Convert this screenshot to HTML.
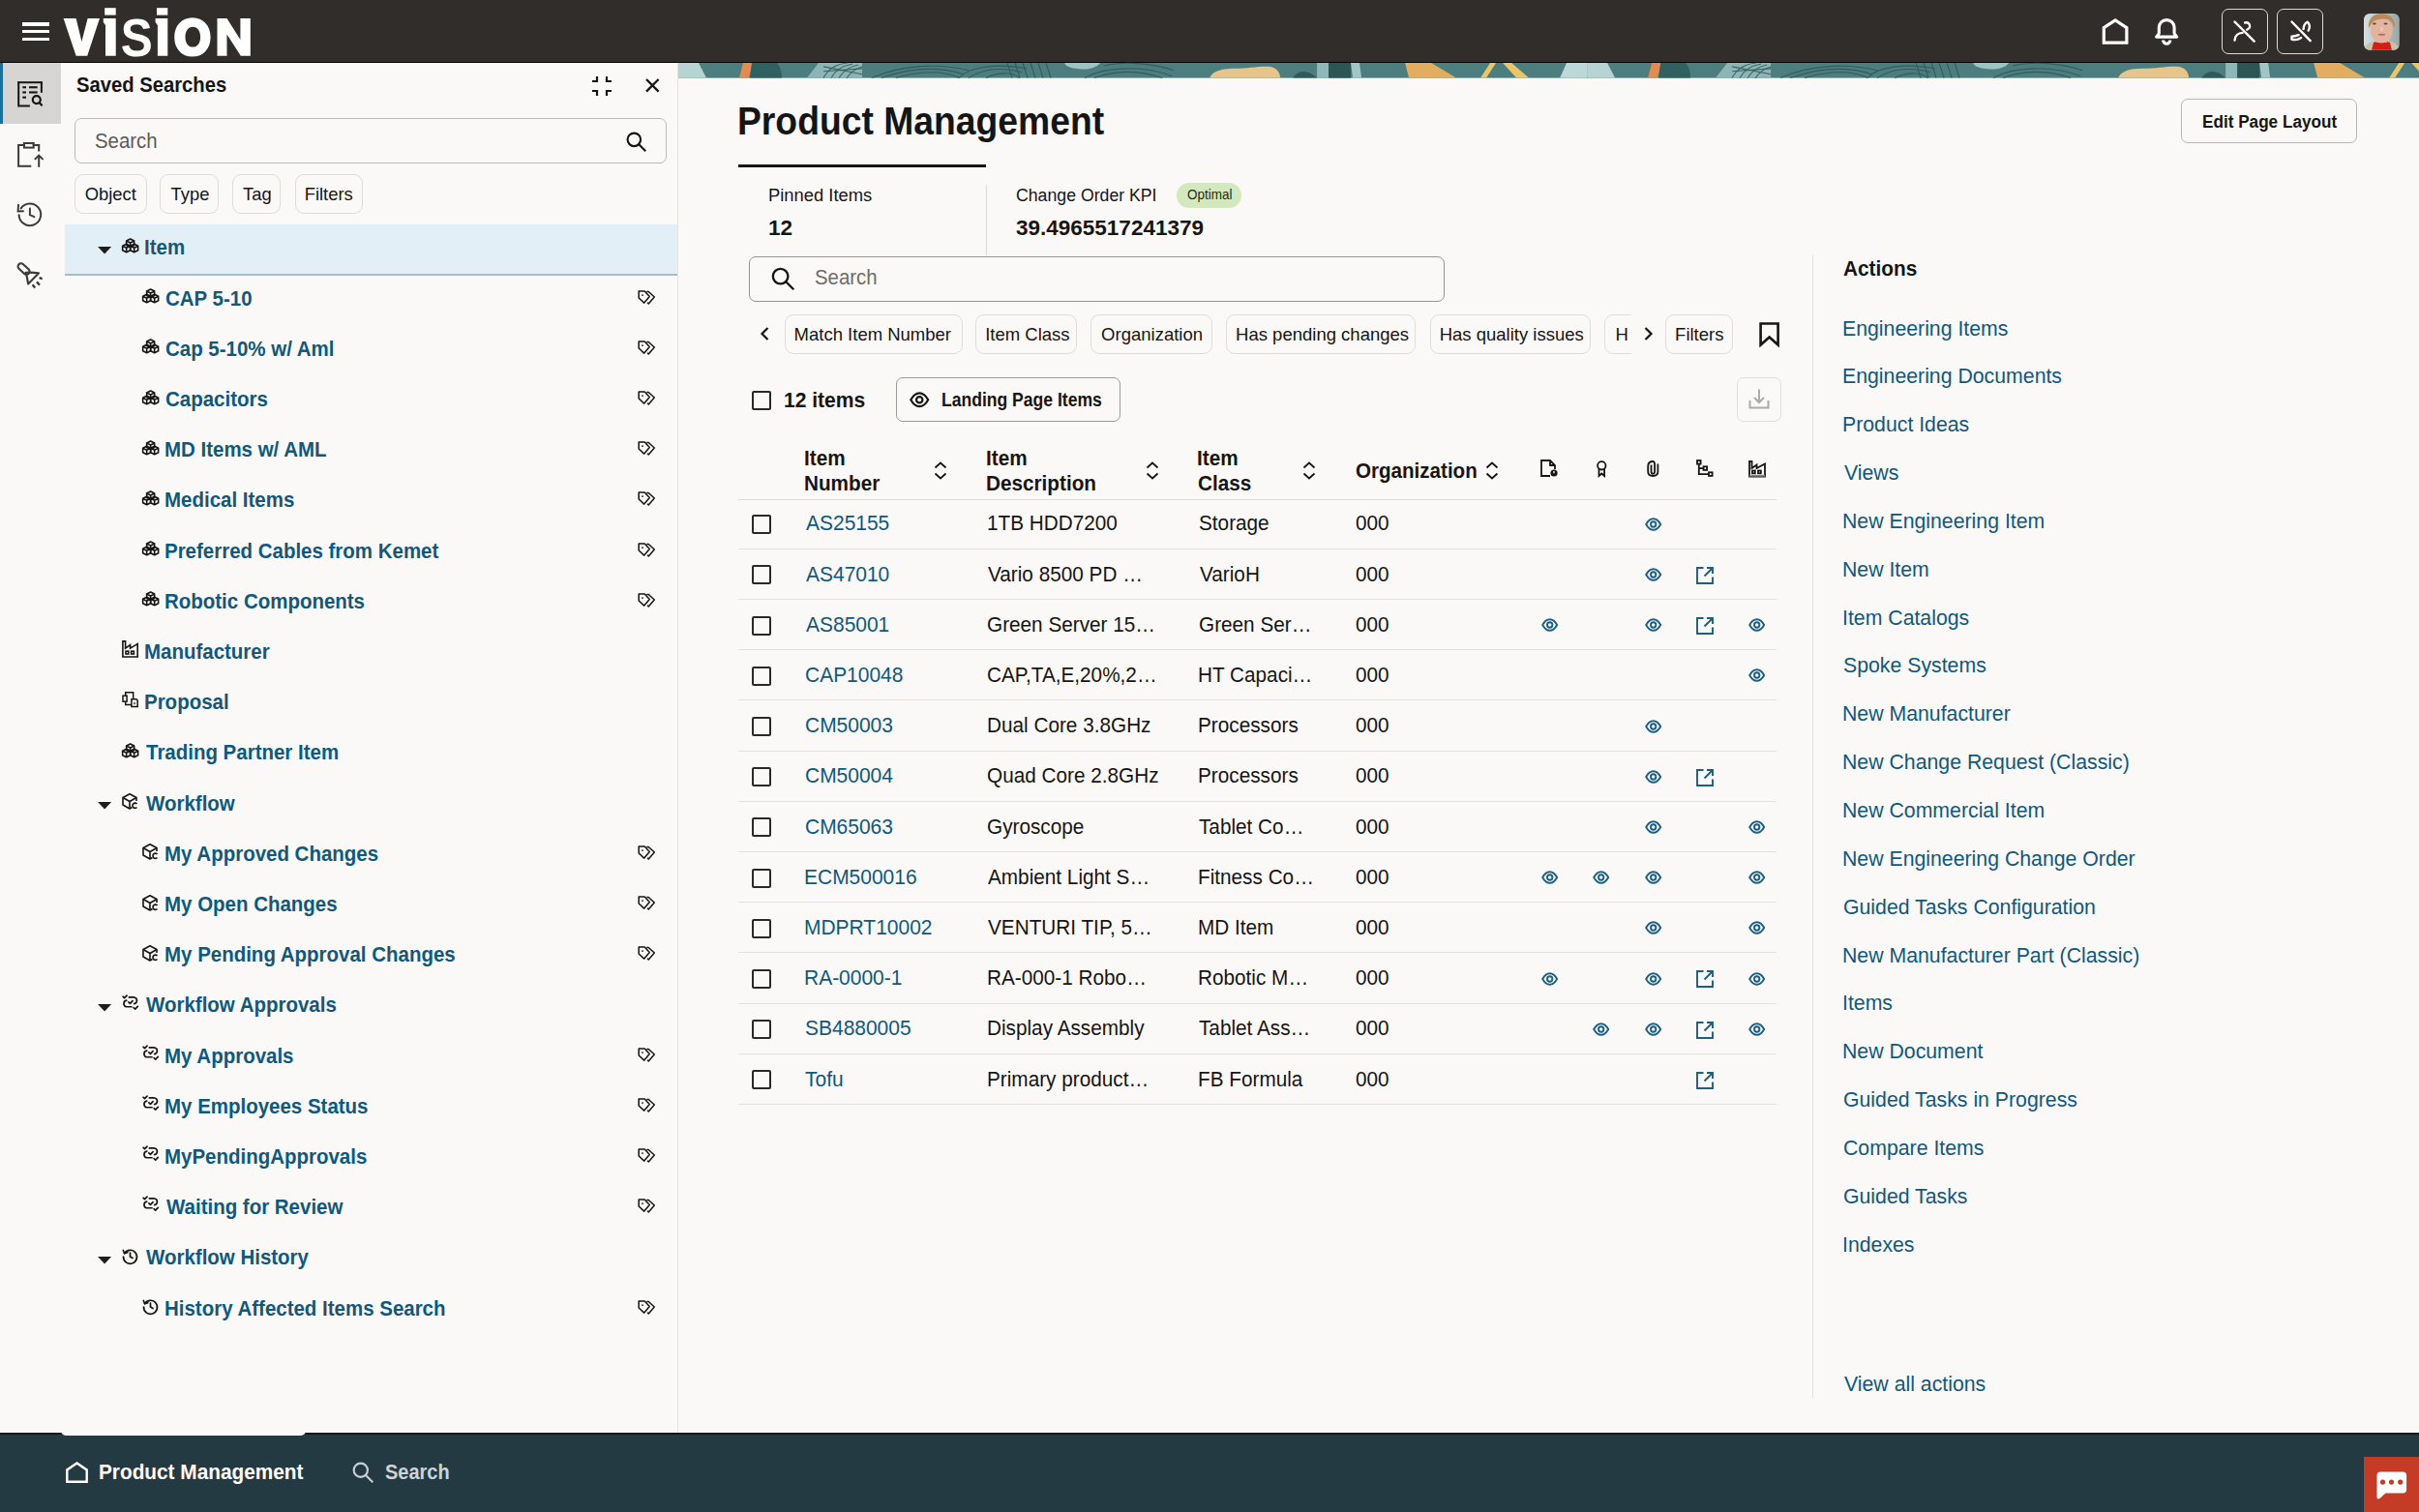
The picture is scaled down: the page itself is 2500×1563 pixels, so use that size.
<!DOCTYPE html><html><head><meta charset="utf-8"><style>
html,body{margin:0;padding:0;}
body{width:2500px;height:1563px;position:relative;overflow:hidden;background:#faf9f7;font-family:"Liberation Sans", sans-serif;}
.t{position:absolute;white-space:nowrap;}
svg{overflow:visible;}
</style></head><body>
<div style="position:absolute;left:0.0px;top:0.0px;width:2500.0px;height:65.0px;background:#312d2a;"></div>
<div style="position:absolute;left:0.0px;top:63.6px;width:2500.0px;height:1.4px;background:#050505;"></div>
<div style="position:absolute;left:23.0px;top:23.0px;width:28.0px;height:3.5px;background:#fff;"></div>
<div style="position:absolute;left:23.0px;top:30.7px;width:28.0px;height:3.5px;background:#fff;"></div>
<div style="position:absolute;left:23.0px;top:38.6px;width:28.0px;height:3.5px;background:#fff;"></div>
<svg style="position:absolute;left:0.0px;top:0.0px;" width="300.0" height="64.0" viewBox="0 0 300 64"><g fill="#fff"><path d="M65.6 19.1 L78.6 19.1 L84.4 43 L90.6 19.1 L103 19.1 L90.2 57.7 L78.6 57.7 Z"/><rect x="108.2" y="8.2" width="11.5" height="7.4"/><path d="M106.8 19.1 L119.7 19.1 L119.7 57.7 L109 57.7 L109 26 L106.8 23 Z"/><rect x="162" y="8.2" width="11.3" height="7.4"/><path d="M160.6 19.1 L173.3 19.1 L173.3 57.7 L162.9 57.7 L162.9 26 L160.6 23 Z"/><path fill-rule="evenodd" d="M198.9 18.2 C210 18.2 217.6 26.5 217.6 38.4 C217.6 50.3 210 58.6 198.9 58.6 C187.8 58.6 180.2 50.3 180.2 38.4 C180.2 26.5 187.8 18.2 198.9 18.2 Z M199.3 27.8 C194.4 27.8 191.5 32 191.5 38.2 C191.5 44.4 194.4 48.6 199.3 48.6 C204.2 48.6 207.1 44.4 207.1 38.2 C207.1 32 204.2 27.8 199.3 27.8 Z"/><path d="M224.5 19.1 L234.5 19.1 L248.4 41 L248.4 19.1 L258.8 19.1 L258.8 57.7 L248.8 57.7 L234.5 35.5 L234.5 57.7 L224.5 57.7 Z"/></g><text x="124.8" y="58.3" font-family="Liberation Sans" font-weight="bold" font-size="55" fill="#fff" transform="translate(124.8 0) scale(0.9 1) translate(-124.8 0)">S</text></svg>
<svg style="position:absolute;left:2172.4px;top:18.8px;" width="28.2" height="27.5" viewBox="0 0 28.2 27.5"><path d="M2.3 25.2 L2.3 9.7 L14.1 1.9 L25.9 9.7 L25.9 25.2 Z" fill="none" stroke="#fff" stroke-width="3.2" stroke-linejoin="miter"/></svg>
<svg style="position:absolute;left:2226.7px;top:18.6px;" width="24.4" height="27.5" viewBox="0 0 24.4 27.5"><g fill="none" stroke="#fff" stroke-width="3.1" stroke-linejoin="round"><path d="M1.6 19.1 L4.3 15.6 L4.3 9.5 A7.9 7.9 0 0 1 20.1 9.5 L20.1 15.6 L22.8 19.1 Z"/><path d="M8.6 22.6 A3.6 3.6 0 0 0 15.8 22.6"/></g></svg>
<div style="position:absolute;left:2296.1px;top:9.0px;width:47.8px;height:47.4px;border:1.7px solid #dcdad7;border-radius:7px;box-sizing:border-box;"></div>
<div style="position:absolute;left:2353.3px;top:9.0px;width:47.8px;height:47.4px;border:1.7px solid #dcdad7;border-radius:7px;box-sizing:border-box;"></div>
<svg style="position:absolute;left:2308.4px;top:21.0px;" width="23.2" height="23.2" viewBox="0 0 23 23"><g fill="none" stroke="#fff" stroke-width="2.4" stroke-linecap="round"><path d="M1.5 1.5 L21.5 21.5"/><path d="M12 2.5 C15 1.6 17.6 3.8 17 6.8 C16.7 8.3 15.5 9.3 14.2 9.6"/><path d="M1.5 20.5 C1.8 16 5 13 9.5 12.8"/></g></svg>
<svg style="position:absolute;left:2367.0px;top:21.0px;" width="23.2" height="23.2" viewBox="0 0 23 23"><g fill="none" stroke="#fff" stroke-width="2.4" stroke-linecap="round" stroke-linejoin="round"><path d="M1.5 1.5 L20.5 21"/><path d="M13.5 9 C13.5 6 15 3.2 17.5 1.8 C20 3.5 20.5 7.5 18.5 10.5"/><path d="M8.5 15 C6 16 3.8 16.5 1.5 16.5 L1.5 19.5 C5 20.5 8.8 19.5 11 17.8"/></g></svg>
<svg style="position:absolute;left:2442.9px;top:14.0px;" width="36.8" height="37.7" viewBox="0 0 36.8 37.7"><defs><clipPath id="avc"><rect x="0" y="0" width="36.8" height="37.7" rx="6"/></clipPath><linearGradient id="avbg" x1="0" x2="1" y1="0" y2="0"><stop offset="0" stop-color="#d3dfe2"/><stop offset="0.5" stop-color="#b4c2c4"/><stop offset="1" stop-color="#97a6a3"/></linearGradient></defs><g clip-path="url(#avc)"><rect width="38" height="38" fill="url(#avbg)"/><path d="M0 38 L2 33 C5 30 9 29 12 28.5 L25 28.5 C29 29 33 31 36 34 L37 38 Z" fill="#c9c0a6"/><path d="M8 38 L10 30 C14 28.5 23 28.5 27 30 L29 38 Z" fill="#d01f16"/><rect x="13" y="25" width="11" height="5" fill="#dba58d"/><ellipse cx="18.3" cy="17" rx="11.5" ry="13.5" fill="#e2b39e"/><path d="M5 15 C4 6 9 0.5 18 0.3 C27 0.5 33 5 32 15 C30 10 28 7 24 6 C19 5 13 6 10 8 C8 10 7 12 5 15 Z" fill="#ba8b58"/><ellipse cx="10.9" cy="10.5" rx="2" ry="0.9" fill="#6b4a3a"/><ellipse cx="22.5" cy="10.5" rx="2" ry="0.9" fill="#6b4a3a"/><ellipse cx="18.5" cy="16" rx="1.2" ry="2.5" fill="#f0c9b6"/><ellipse cx="18.5" cy="21.8" rx="3.8" ry="1" fill="#b56f5e"/></g></svg>
<svg style="position:absolute;left:700.8px;top:65px;" width="1799.2" height="15.6" viewBox="0 0 1799 15.6" preserveAspectRatio="none"><g transform="scale(1 0.975)"><rect x="0" y="0" width="940" height="16" fill="#4c7e7f"/><path d="M0 0 L21 0 L29 16 L0 16 Z" fill="#b7d3d3"/><path d="M67 0 L77 0 L73 16 L63 16 Z" fill="#e38b50"/><path d="M76 0 L102 0 C106 5 107 11 107 16 L74 16 Z" fill="#30605f"/><path d="M145 0 L190 0 L190 16 L133 16 Z" fill="#8db5b5"/><g fill="none" stroke="#2f5757" stroke-width="1.1" opacity="0.85"><path d="M150 16 C155 6 165 1 175 0"/><path d="M158 16 C162 8 170 3 180 1"/><path d="M166 16 C170 9 176 4 186 2"/><path d="M174 16 C178 10 183 6 190 4"/><path d="M150 4 L190 12 M150 9 L190 6"/><path d="M200 16 C230 2 270 0 300 8"/><path d="M210 16 C240 5 270 4 295 12"/><path d="M225 16 C250 8 275 8 290 16"/><path d="M290 16 C300 4 330 0 360 6"/><path d="M300 16 C315 6 335 4 355 10"/><path d="M318 16 C330 10 345 9 352 16"/><path d="M340 0 L345 16 M348 0 L353 16 M356 0 L361 16 M364 0 L369 16 M372 0 L377 16 M380 0 L385 16"/><path d="M420 16 C440 4 480 2 510 14"/><path d="M430 16 C450 8 475 7 500 16"/><path d="M440 3 C460 -2 490 0 512 8"/></g><path d="M399 0 L436 0 C432 6 420 8 410 6 C404 5 400 3 399 0 Z" fill="#9cc4c4"/><path d="M549 16 C552 9 560 6 575 6 C590 6 600 3 612 4 C618 5 622 10 622 16 Z" fill="#e6c48a"/><path d="M635 16 C640 8 650 6 660 16 Z" fill="#2f5a5b"/><path d="M660 0 L672 0 L672 16 L660 16 Z" fill="#8eb8b8"/><path d="M672 0 L695 0 L695 16 L672 16 Z" fill="#2e5556"/><path d="M695 0 L704 0 L706 16 L697 16 Z" fill="#a2c6c6"/><path d="M751 0 L778 0 L804 16 L755 16 Z" fill="#e2ad60"/><path d="M839 0 L845 0 L835 16 L829 16 Z" fill="#e9c66a"/><path d="M852 0 L861 0 L879 16 L866 16 Z" fill="#e9c66a"/><path d="M918 0 L939 0 L939 16 L911 16 Z" fill="#bcd8d8"/><g transform="translate(939 0)"><rect x="0" y="0" width="940" height="16" fill="#4c7e7f"/><path d="M0 0 L21 0 L29 16 L0 16 Z" fill="#b7d3d3"/><path d="M67 0 L77 0 L73 16 L63 16 Z" fill="#e38b50"/><path d="M76 0 L102 0 C106 5 107 11 107 16 L74 16 Z" fill="#30605f"/><path d="M145 0 L190 0 L190 16 L133 16 Z" fill="#8db5b5"/><g fill="none" stroke="#2f5757" stroke-width="1.1" opacity="0.85"><path d="M150 16 C155 6 165 1 175 0"/><path d="M158 16 C162 8 170 3 180 1"/><path d="M166 16 C170 9 176 4 186 2"/><path d="M174 16 C178 10 183 6 190 4"/><path d="M150 4 L190 12 M150 9 L190 6"/><path d="M200 16 C230 2 270 0 300 8"/><path d="M210 16 C240 5 270 4 295 12"/><path d="M225 16 C250 8 275 8 290 16"/><path d="M290 16 C300 4 330 0 360 6"/><path d="M300 16 C315 6 335 4 355 10"/><path d="M318 16 C330 10 345 9 352 16"/><path d="M340 0 L345 16 M348 0 L353 16 M356 0 L361 16 M364 0 L369 16 M372 0 L377 16 M380 0 L385 16"/><path d="M420 16 C440 4 480 2 510 14"/><path d="M430 16 C450 8 475 7 500 16"/><path d="M440 3 C460 -2 490 0 512 8"/></g><path d="M399 0 L436 0 C432 6 420 8 410 6 C404 5 400 3 399 0 Z" fill="#9cc4c4"/><path d="M549 16 C552 9 560 6 575 6 C590 6 600 3 612 4 C618 5 622 10 622 16 Z" fill="#e6c48a"/><path d="M635 16 C640 8 650 6 660 16 Z" fill="#2f5a5b"/><path d="M660 0 L672 0 L672 16 L660 16 Z" fill="#8eb8b8"/><path d="M672 0 L695 0 L695 16 L672 16 Z" fill="#2e5556"/><path d="M695 0 L704 0 L706 16 L697 16 Z" fill="#a2c6c6"/><path d="M751 0 L778 0 L804 16 L755 16 Z" fill="#e2ad60"/><path d="M839 0 L845 0 L835 16 L829 16 Z" fill="#e9c66a"/><path d="M852 0 L861 0 L879 16 L866 16 Z" fill="#e9c66a"/><path d="M918 0 L939 0 L939 16 L911 16 Z" fill="#bcd8d8"/></g></g></svg>
<div style="position:absolute;left:2.7px;top:65.0px;width:60.3px;height:63.0px;background:#d6d5d3;"></div>
<div style="position:absolute;left:0.0px;top:65.0px;width:2.7px;height:63.0px;background:#1a709c;"></div>
<svg style="position:absolute;left:17.9px;top:84.0px;" width="26.2" height="26.5" viewBox="0 0 26.2 26.5"><g fill="none" stroke="#161513" stroke-width="2"><path d="M0.2 1.2 L25.8 1.2"/><path d="M1.2 0.5 L1.2 25.6 L12.9 25.6"/><path d="M24.9 0.5 L24.9 11.8"/></g><g fill="#161513"><rect x="5.3" y="5.2" width="3.7" height="2.1"/><rect x="12" y="5.2" width="8.7" height="2.1"/><rect x="5.3" y="10.4" width="3.7" height="2.1"/><rect x="12" y="10.4" width="8.7" height="2.1"/><rect x="5.3" y="15.6" width="3.7" height="2.1"/></g><g fill="none" stroke="#161513" stroke-width="2.2"><circle cx="19.8" cy="19.1" r="4"/><path d="M22.8 22.2 L25.6 25.2"/></g></svg>
<svg style="position:absolute;left:17.9px;top:147.0px;" width="27.0" height="26.0" viewBox="0 0 27 26"><g fill="none" stroke="#3d3b39" stroke-width="2" stroke-linecap="square"><path d="M13.3 24.8 L1.1 24.8 L1.1 2.9 L6.9 2.9"/><path d="M16.7 2.9 L22.2 2.9 L22.2 8.6"/><rect x="6.9" y="1" width="9.8" height="4.6"/><path d="M22.2 25 L22.2 13.8 M18.4 17.4 L22.2 13.6 L26 17.4" stroke-linecap="round"/></g></svg>
<svg style="position:absolute;left:17.9px;top:208.9px;" width="26.0" height="26.0" viewBox="0 0 26 26"><g fill="none" stroke="#3d3b39" stroke-width="2" stroke-linecap="round"><path d="M1.6 13.2 A11.3 11.3 0 1 0 3.6 6.4"/><path d="M1 2.8 L0.6 9.4 L6 9.2" stroke-linejoin="miter"/><path d="M12.9 6.6 L12.9 13.2 L17.4 15.2"/></g></svg>
<svg style="position:absolute;left:12.0px;top:266.0px;" width="38.0" height="36.0" viewBox="0 0 38 36"><g fill="none" stroke="#3d3b39" stroke-width="2.1" stroke-linejoin="round"><rect x="-3.2" y="-3.2" width="14" height="6.4" rx="3.2" transform="translate(9.8 9.5) rotate(43)"/><path d="M14.6 15.8 Q20 15.3 27.9 16.4 L17.1 27.4 Q16.2 20.5 14.6 15.8 Z"/></g><g stroke="#3d3b39" stroke-width="2.3"><path d="M28.6 21.2 L31.7 22.2 M25.9 25.4 L29 28.6 M21.6 28.2 L24.2 31.4"/></g></svg>
<div style="position:absolute;left:700.0px;top:65.0px;width:1.0px;height:1416.0px;background:#e4e2df;"></div>
<div class="t" style="left:78.82px;top:77.05px;font-size:21.8px;line-height:21.8px;font-weight:bold;color:#161513;transform:scaleX(0.928);transform-origin:0 0;">Saved Searches</div>
<svg style="position:absolute;left:611.0px;top:78.0px;" width="22.0" height="22.0" viewBox="0 0 22 22"><g fill="none" stroke="#161513" stroke-width="2.2"><path d="M6 1 L6 6 L1 6"/><path d="M16 1 L16 6 L21 6"/><path d="M1 16 L6 16 L6 21"/><path d="M21 16 L16 16 L16 21"/></g></svg>
<svg style="position:absolute;left:666.8px;top:81.4px;" width="14.6" height="14.6" viewBox="0 0 14.6 14.6"><path d="M1 1 L13.6 13.6 M13.6 1 L1 13.6" stroke="#161513" stroke-width="2.3" fill="none"/></svg>
<div style="position:absolute;left:77.0px;top:122.4px;width:612.0px;height:47.1px;border:1.5px solid #bdbab6;border-radius:7px;box-sizing:border-box;"></div>
<div class="t" style="left:98.07px;top:135.01px;font-size:22.2px;line-height:22.2px;font-weight:normal;color:#5f5b57;transform:scaleX(0.92);transform-origin:0 0;">Search</div>
<svg style="position:absolute;left:646.6px;top:135.9px;" width="20.4" height="20.4" viewBox="0 0 22 22"><g fill="none" stroke="#161513" stroke-width="2.3"><circle cx="9" cy="9" r="7.3"/><path d="M14.3 14.3 L21 21" stroke-linecap="square"/></g></svg>
<div style="position:absolute;left:77.0px;top:180.3px;width:75.4px;height:41.0px;border:1px solid #dfdcd8;border-radius:9px;box-sizing:border-box;"></div>
<div class="t" style="left:87.73px;top:191.82px;font-size:18.4px;line-height:18.4px;font-weight:normal;color:#161513;">Object</div>
<div style="position:absolute;left:165.4px;top:180.3px;width:61.0px;height:41.0px;border:1px solid #dfdcd8;border-radius:9px;box-sizing:border-box;"></div>
<div class="t" style="left:176.59px;top:191.82px;font-size:18.4px;line-height:18.4px;font-weight:normal;color:#161513;">Type</div>
<div style="position:absolute;left:239.9px;top:180.3px;width:50.6px;height:41.0px;border:1px solid #dfdcd8;border-radius:9px;box-sizing:border-box;"></div>
<div class="t" style="left:251.09px;top:191.82px;font-size:18.4px;line-height:18.4px;font-weight:normal;color:#161513;">Tag</div>
<div style="position:absolute;left:304.6px;top:180.3px;width:70.9px;height:41.0px;border:1px solid #dfdcd8;border-radius:9px;box-sizing:border-box;"></div>
<div class="t" style="left:314.69px;top:191.82px;font-size:18.4px;line-height:18.4px;font-weight:normal;color:#161513;">Filters</div>
<div style="position:absolute;left:67.0px;top:232.3px;width:633.0px;height:51.1px;background:#e2eff7;"></div>
<div style="position:absolute;left:67.0px;top:283.2px;width:633.0px;height:1.8px;background:#a8bcc7;"></div>
<svg style="position:absolute;left:101.0px;top:254.9px;" width="14.2" height="7.5" viewBox="0 0 14 7.5"><path d="M0 0 L14 0 L7 7.5 Z" fill="#1f1d1c"/></svg>
<svg style="position:absolute;left:125.7px;top:245.9px;" width="17.3" height="15.5" viewBox="0 0 17 15.5"><g fill="none" stroke="#161513" stroke-width="1.6" stroke-linejoin="round"><path d="M8.5 1 L12.5 3 L12.5 7.5 L8.5 9.5 L4.5 7.5 L4.5 3 Z M4.5 3 L8.5 5 L12.5 3 M8.5 5 L8.5 9.5"/><path d="M4.5 6.199999999999999 L8.5 8.2 L8.5 12.7 L4.5 14.7 L0.5 12.7 L0.5 8.2 Z M0.5 8.2 L4.5 10.2 L8.5 8.2 M4.5 10.2 L4.5 14.7"/><path d="M12.5 6.199999999999999 L16.5 8.2 L16.5 12.7 L12.5 14.7 L8.5 12.7 L8.5 8.2 Z M8.5 8.2 L12.5 10.2 L16.5 8.2 M12.5 10.2 L12.5 14.7"/></g></svg>
<div class="t" style="left:149.43px;top:245.43px;font-size:21.7px;line-height:21.7px;font-weight:bold;color:#10587c;transform:scaleX(0.944);transform-origin:0 0;">Item</div>
<svg style="position:absolute;left:146.7px;top:298.1px;" width="17.3" height="15.5" viewBox="0 0 17 15.5"><g fill="none" stroke="#161513" stroke-width="1.6" stroke-linejoin="round"><path d="M8.5 1 L12.5 3 L12.5 7.5 L8.5 9.5 L4.5 7.5 L4.5 3 Z M4.5 3 L8.5 5 L12.5 3 M8.5 5 L8.5 9.5"/><path d="M4.5 6.199999999999999 L8.5 8.2 L8.5 12.7 L4.5 14.7 L0.5 12.7 L0.5 8.2 Z M0.5 8.2 L4.5 10.2 L8.5 8.2 M4.5 10.2 L4.5 14.7"/><path d="M12.5 6.199999999999999 L16.5 8.2 L16.5 12.7 L12.5 14.7 L8.5 12.7 L8.5 8.2 Z M8.5 8.2 L12.5 10.2 L16.5 8.2 M12.5 10.2 L12.5 14.7"/></g></svg>
<div class="t" style="left:170.76px;top:297.63px;font-size:21.7px;line-height:21.7px;font-weight:bold;color:#10587c;transform:scaleX(0.944);transform-origin:0 0;">CAP 5-10</div>
<svg style="position:absolute;left:659.0px;top:299.5px;" width="18.5" height="14.6" viewBox="0 0 18 14.5"><g fill="none" stroke="#161513" stroke-width="1.5" stroke-linejoin="round"><path d="M1 1 L7 1 L12 6.5 L6.5 13 L1 8 Z"/><path d="M9 1.5 L11 1.5 L17 7 L11 13.8 L9.8 12.6"/></g><circle cx="4.8" cy="5" r="0.9" fill="#161513"/></svg>
<svg style="position:absolute;left:146.7px;top:350.3px;" width="17.3" height="15.5" viewBox="0 0 17 15.5"><g fill="none" stroke="#161513" stroke-width="1.6" stroke-linejoin="round"><path d="M8.5 1 L12.5 3 L12.5 7.5 L8.5 9.5 L4.5 7.5 L4.5 3 Z M4.5 3 L8.5 5 L12.5 3 M8.5 5 L8.5 9.5"/><path d="M4.5 6.199999999999999 L8.5 8.2 L8.5 12.7 L4.5 14.7 L0.5 12.7 L0.5 8.2 Z M0.5 8.2 L4.5 10.2 L8.5 8.2 M4.5 10.2 L4.5 14.7"/><path d="M12.5 6.199999999999999 L16.5 8.2 L16.5 12.7 L12.5 14.7 L8.5 12.7 L8.5 8.2 Z M8.5 8.2 L12.5 10.2 L16.5 8.2 M12.5 10.2 L12.5 14.7"/></g></svg>
<div class="t" style="left:170.76px;top:349.83px;font-size:21.7px;line-height:21.7px;font-weight:bold;color:#10587c;transform:scaleX(0.944);transform-origin:0 0;">Cap 5-10% w/ Aml</div>
<svg style="position:absolute;left:659.0px;top:351.7px;" width="18.5" height="14.6" viewBox="0 0 18 14.5"><g fill="none" stroke="#161513" stroke-width="1.5" stroke-linejoin="round"><path d="M1 1 L7 1 L12 6.5 L6.5 13 L1 8 Z"/><path d="M9 1.5 L11 1.5 L17 7 L11 13.8 L9.8 12.6"/></g><circle cx="4.8" cy="5" r="0.9" fill="#161513"/></svg>
<svg style="position:absolute;left:146.7px;top:402.5px;" width="17.3" height="15.5" viewBox="0 0 17 15.5"><g fill="none" stroke="#161513" stroke-width="1.6" stroke-linejoin="round"><path d="M8.5 1 L12.5 3 L12.5 7.5 L8.5 9.5 L4.5 7.5 L4.5 3 Z M4.5 3 L8.5 5 L12.5 3 M8.5 5 L8.5 9.5"/><path d="M4.5 6.199999999999999 L8.5 8.2 L8.5 12.7 L4.5 14.7 L0.5 12.7 L0.5 8.2 Z M0.5 8.2 L4.5 10.2 L8.5 8.2 M4.5 10.2 L4.5 14.7"/><path d="M12.5 6.199999999999999 L16.5 8.2 L16.5 12.7 L12.5 14.7 L8.5 12.7 L8.5 8.2 Z M8.5 8.2 L12.5 10.2 L16.5 8.2 M12.5 10.2 L12.5 14.7"/></g></svg>
<div class="t" style="left:170.76px;top:402.03px;font-size:21.7px;line-height:21.7px;font-weight:bold;color:#10587c;transform:scaleX(0.944);transform-origin:0 0;">Capacitors</div>
<svg style="position:absolute;left:659.0px;top:403.9px;" width="18.5" height="14.6" viewBox="0 0 18 14.5"><g fill="none" stroke="#161513" stroke-width="1.5" stroke-linejoin="round"><path d="M1 1 L7 1 L12 6.5 L6.5 13 L1 8 Z"/><path d="M9 1.5 L11 1.5 L17 7 L11 13.8 L9.8 12.6"/></g><circle cx="4.8" cy="5" r="0.9" fill="#161513"/></svg>
<svg style="position:absolute;left:146.7px;top:454.7px;" width="17.3" height="15.5" viewBox="0 0 17 15.5"><g fill="none" stroke="#161513" stroke-width="1.6" stroke-linejoin="round"><path d="M8.5 1 L12.5 3 L12.5 7.5 L8.5 9.5 L4.5 7.5 L4.5 3 Z M4.5 3 L8.5 5 L12.5 3 M8.5 5 L8.5 9.5"/><path d="M4.5 6.199999999999999 L8.5 8.2 L8.5 12.7 L4.5 14.7 L0.5 12.7 L0.5 8.2 Z M0.5 8.2 L4.5 10.2 L8.5 8.2 M4.5 10.2 L4.5 14.7"/><path d="M12.5 6.199999999999999 L16.5 8.2 L16.5 12.7 L12.5 14.7 L8.5 12.7 L8.5 8.2 Z M8.5 8.2 L12.5 10.2 L16.5 8.2 M12.5 10.2 L12.5 14.7"/></g></svg>
<div class="t" style="left:170.23px;top:454.23px;font-size:21.7px;line-height:21.7px;font-weight:bold;color:#10587c;transform:scaleX(0.944);transform-origin:0 0;">MD Items w/ AML</div>
<svg style="position:absolute;left:659.0px;top:456.1px;" width="18.5" height="14.6" viewBox="0 0 18 14.5"><g fill="none" stroke="#161513" stroke-width="1.5" stroke-linejoin="round"><path d="M1 1 L7 1 L12 6.5 L6.5 13 L1 8 Z"/><path d="M9 1.5 L11 1.5 L17 7 L11 13.8 L9.8 12.6"/></g><circle cx="4.8" cy="5" r="0.9" fill="#161513"/></svg>
<svg style="position:absolute;left:146.7px;top:506.9px;" width="17.3" height="15.5" viewBox="0 0 17 15.5"><g fill="none" stroke="#161513" stroke-width="1.6" stroke-linejoin="round"><path d="M8.5 1 L12.5 3 L12.5 7.5 L8.5 9.5 L4.5 7.5 L4.5 3 Z M4.5 3 L8.5 5 L12.5 3 M8.5 5 L8.5 9.5"/><path d="M4.5 6.199999999999999 L8.5 8.2 L8.5 12.7 L4.5 14.7 L0.5 12.7 L0.5 8.2 Z M0.5 8.2 L4.5 10.2 L8.5 8.2 M4.5 10.2 L4.5 14.7"/><path d="M12.5 6.199999999999999 L16.5 8.2 L16.5 12.7 L12.5 14.7 L8.5 12.7 L8.5 8.2 Z M8.5 8.2 L12.5 10.2 L16.5 8.2 M12.5 10.2 L12.5 14.7"/></g></svg>
<div class="t" style="left:170.23px;top:506.43px;font-size:21.7px;line-height:21.7px;font-weight:bold;color:#10587c;transform:scaleX(0.944);transform-origin:0 0;">Medical Items</div>
<svg style="position:absolute;left:659.0px;top:508.3px;" width="18.5" height="14.6" viewBox="0 0 18 14.5"><g fill="none" stroke="#161513" stroke-width="1.5" stroke-linejoin="round"><path d="M1 1 L7 1 L12 6.5 L6.5 13 L1 8 Z"/><path d="M9 1.5 L11 1.5 L17 7 L11 13.8 L9.8 12.6"/></g><circle cx="4.8" cy="5" r="0.9" fill="#161513"/></svg>
<svg style="position:absolute;left:146.7px;top:559.1px;" width="17.3" height="15.5" viewBox="0 0 17 15.5"><g fill="none" stroke="#161513" stroke-width="1.6" stroke-linejoin="round"><path d="M8.5 1 L12.5 3 L12.5 7.5 L8.5 9.5 L4.5 7.5 L4.5 3 Z M4.5 3 L8.5 5 L12.5 3 M8.5 5 L8.5 9.5"/><path d="M4.5 6.199999999999999 L8.5 8.2 L8.5 12.7 L4.5 14.7 L0.5 12.7 L0.5 8.2 Z M0.5 8.2 L4.5 10.2 L8.5 8.2 M4.5 10.2 L4.5 14.7"/><path d="M12.5 6.199999999999999 L16.5 8.2 L16.5 12.7 L12.5 14.7 L8.5 12.7 L8.5 8.2 Z M8.5 8.2 L12.5 10.2 L16.5 8.2 M12.5 10.2 L12.5 14.7"/></g></svg>
<div class="t" style="left:170.23px;top:558.63px;font-size:21.7px;line-height:21.7px;font-weight:bold;color:#10587c;transform:scaleX(0.944);transform-origin:0 0;">Preferred Cables from Kemet</div>
<svg style="position:absolute;left:659.0px;top:560.5px;" width="18.5" height="14.6" viewBox="0 0 18 14.5"><g fill="none" stroke="#161513" stroke-width="1.5" stroke-linejoin="round"><path d="M1 1 L7 1 L12 6.5 L6.5 13 L1 8 Z"/><path d="M9 1.5 L11 1.5 L17 7 L11 13.8 L9.8 12.6"/></g><circle cx="4.8" cy="5" r="0.9" fill="#161513"/></svg>
<svg style="position:absolute;left:146.7px;top:611.3px;" width="17.3" height="15.5" viewBox="0 0 17 15.5"><g fill="none" stroke="#161513" stroke-width="1.6" stroke-linejoin="round"><path d="M8.5 1 L12.5 3 L12.5 7.5 L8.5 9.5 L4.5 7.5 L4.5 3 Z M4.5 3 L8.5 5 L12.5 3 M8.5 5 L8.5 9.5"/><path d="M4.5 6.199999999999999 L8.5 8.2 L8.5 12.7 L4.5 14.7 L0.5 12.7 L0.5 8.2 Z M0.5 8.2 L4.5 10.2 L8.5 8.2 M4.5 10.2 L4.5 14.7"/><path d="M12.5 6.199999999999999 L16.5 8.2 L16.5 12.7 L12.5 14.7 L8.5 12.7 L8.5 8.2 Z M8.5 8.2 L12.5 10.2 L16.5 8.2 M12.5 10.2 L12.5 14.7"/></g></svg>
<div class="t" style="left:170.23px;top:610.83px;font-size:21.7px;line-height:21.7px;font-weight:bold;color:#10587c;transform:scaleX(0.944);transform-origin:0 0;">Robotic Components</div>
<svg style="position:absolute;left:659.0px;top:612.7px;" width="18.5" height="14.6" viewBox="0 0 18 14.5"><g fill="none" stroke="#161513" stroke-width="1.5" stroke-linejoin="round"><path d="M1 1 L7 1 L12 6.5 L6.5 13 L1 8 Z"/><path d="M9 1.5 L11 1.5 L17 7 L11 13.8 L9.8 12.6"/></g><circle cx="4.8" cy="5" r="0.9" fill="#161513"/></svg>
<svg style="position:absolute;left:125.7px;top:661.9px;" width="17.2" height="17.8" viewBox="0 0 17.2 17.8"><g fill="none" stroke="#161513" stroke-width="1.6"><path d="M0.9 17 L0.9 0.9 L3.6 0.9 L3.6 8.2 L8.6 4.6 L8.6 8.2 L16.2 3.6 L16.2 17 Z"/><rect x="4" y="11.2" width="2.8" height="2.8"/><rect x="9.6" y="11.2" width="2.8" height="2.8"/></g></svg>
<div class="t" style="left:149.43px;top:663.03px;font-size:21.7px;line-height:21.7px;font-weight:bold;color:#10587c;transform:scaleX(0.944);transform-origin:0 0;">Manufacturer</div>
<svg style="position:absolute;left:125.7px;top:714.9px;" width="17.0" height="17.0" viewBox="0 0 17 17"><g stroke="#161513" stroke-width="1.5" fill="#faf9f7"><rect x="3.7" y="0.8" width="8" height="12.7"/><rect x="1" y="4.2" width="4.1" height="6"/><path d="M9.9 15.5 L9.9 7.8 L14 7.8 Q16.2 7.8 16.2 10 L16.2 15.5 Z"/></g><rect x="11.9" y="10.8" width="2.3" height="2.4" fill="#777"/></svg>
<div class="t" style="left:149.43px;top:715.23px;font-size:21.7px;line-height:21.7px;font-weight:bold;color:#10587c;transform:scaleX(0.944);transform-origin:0 0;">Proposal</div>
<svg style="position:absolute;left:125.7px;top:767.9px;" width="17.3" height="15.5" viewBox="0 0 17 15.5"><g fill="none" stroke="#161513" stroke-width="1.6" stroke-linejoin="round"><path d="M8.5 1 L12.5 3 L12.5 7.5 L8.5 9.5 L4.5 7.5 L4.5 3 Z M4.5 3 L8.5 5 L12.5 3 M8.5 5 L8.5 9.5"/><path d="M4.5 6.199999999999999 L8.5 8.2 L8.5 12.7 L4.5 14.7 L0.5 12.7 L0.5 8.2 Z M0.5 8.2 L4.5 10.2 L8.5 8.2 M4.5 10.2 L4.5 14.7"/><path d="M12.5 6.199999999999999 L16.5 8.2 L16.5 12.7 L12.5 14.7 L8.5 12.7 L8.5 8.2 Z M8.5 8.2 L12.5 10.2 L16.5 8.2 M12.5 10.2 L12.5 14.7"/></g></svg>
<div class="t" style="left:150.57px;top:767.43px;font-size:21.7px;line-height:21.7px;font-weight:bold;color:#10587c;transform:scaleX(0.944);transform-origin:0 0;">Trading Partner Item</div>
<svg style="position:absolute;left:101.0px;top:829.1px;" width="14.2" height="7.5" viewBox="0 0 14 7.5"><path d="M0 0 L14 0 L7 7.5 Z" fill="#1f1d1c"/></svg>
<svg style="position:absolute;left:125.7px;top:820.1px;" width="17.0" height="17.0" viewBox="0 0 17 17"><g fill="none" stroke="#161513" stroke-width="1.6" stroke-linejoin="round"><path d="M10.5 14.5 L8 16 L1 12 L1 4.5 L8 0.8 L15 4.5 L15 8"/><path d="M1 4.5 L8 8.5 L15 4.5 M8 8.5 L8 16"/><path d="M15.5 11 A2.6 2.6 0 1 0 15.5 14.5"/></g></svg>
<div class="t" style="left:150.78px;top:819.63px;font-size:21.7px;line-height:21.7px;font-weight:bold;color:#10587c;transform:scaleX(0.944);transform-origin:0 0;">Workflow</div>
<svg style="position:absolute;left:146.7px;top:872.3px;" width="17.0" height="17.0" viewBox="0 0 17 17"><g fill="none" stroke="#161513" stroke-width="1.6" stroke-linejoin="round"><path d="M10.5 14.5 L8 16 L1 12 L1 4.5 L8 0.8 L15 4.5 L15 8"/><path d="M1 4.5 L8 8.5 L15 4.5 M8 8.5 L8 16"/><path d="M15.5 11 A2.6 2.6 0 1 0 15.5 14.5"/></g></svg>
<div class="t" style="left:170.23px;top:871.83px;font-size:21.7px;line-height:21.7px;font-weight:bold;color:#10587c;transform:scaleX(0.944);transform-origin:0 0;">My Approved Changes</div>
<svg style="position:absolute;left:659.0px;top:873.7px;" width="18.5" height="14.6" viewBox="0 0 18 14.5"><g fill="none" stroke="#161513" stroke-width="1.5" stroke-linejoin="round"><path d="M1 1 L7 1 L12 6.5 L6.5 13 L1 8 Z"/><path d="M9 1.5 L11 1.5 L17 7 L11 13.8 L9.8 12.6"/></g><circle cx="4.8" cy="5" r="0.9" fill="#161513"/></svg>
<svg style="position:absolute;left:146.7px;top:924.5px;" width="17.0" height="17.0" viewBox="0 0 17 17"><g fill="none" stroke="#161513" stroke-width="1.6" stroke-linejoin="round"><path d="M10.5 14.5 L8 16 L1 12 L1 4.5 L8 0.8 L15 4.5 L15 8"/><path d="M1 4.5 L8 8.5 L15 4.5 M8 8.5 L8 16"/><path d="M15.5 11 A2.6 2.6 0 1 0 15.5 14.5"/></g></svg>
<div class="t" style="left:170.23px;top:924.03px;font-size:21.7px;line-height:21.7px;font-weight:bold;color:#10587c;transform:scaleX(0.944);transform-origin:0 0;">My Open Changes</div>
<svg style="position:absolute;left:659.0px;top:925.9px;" width="18.5" height="14.6" viewBox="0 0 18 14.5"><g fill="none" stroke="#161513" stroke-width="1.5" stroke-linejoin="round"><path d="M1 1 L7 1 L12 6.5 L6.5 13 L1 8 Z"/><path d="M9 1.5 L11 1.5 L17 7 L11 13.8 L9.8 12.6"/></g><circle cx="4.8" cy="5" r="0.9" fill="#161513"/></svg>
<svg style="position:absolute;left:146.7px;top:976.7px;" width="17.0" height="17.0" viewBox="0 0 17 17"><g fill="none" stroke="#161513" stroke-width="1.6" stroke-linejoin="round"><path d="M10.5 14.5 L8 16 L1 12 L1 4.5 L8 0.8 L15 4.5 L15 8"/><path d="M1 4.5 L8 8.5 L15 4.5 M8 8.5 L8 16"/><path d="M15.5 11 A2.6 2.6 0 1 0 15.5 14.5"/></g></svg>
<div class="t" style="left:170.23px;top:976.23px;font-size:21.7px;line-height:21.7px;font-weight:bold;color:#10587c;transform:scaleX(0.944);transform-origin:0 0;">My Pending Approval Changes</div>
<svg style="position:absolute;left:659.0px;top:978.1px;" width="18.5" height="14.6" viewBox="0 0 18 14.5"><g fill="none" stroke="#161513" stroke-width="1.5" stroke-linejoin="round"><path d="M1 1 L7 1 L12 6.5 L6.5 13 L1 8 Z"/><path d="M9 1.5 L11 1.5 L17 7 L11 13.8 L9.8 12.6"/></g><circle cx="4.8" cy="5" r="0.9" fill="#161513"/></svg>
<svg style="position:absolute;left:101.0px;top:1037.9px;" width="14.2" height="7.5" viewBox="0 0 14 7.5"><path d="M0 0 L14 0 L7 7.5 Z" fill="#1f1d1c"/></svg>
<svg style="position:absolute;left:125.7px;top:1027.5px;" width="17.2" height="16.7" viewBox="0 0 16.3 15.2"><g fill="none" stroke="#161513" stroke-width="1.6" stroke-linecap="round" stroke-linejoin="round"><path d="M1 1.8 L2.4 3.2 L4.8 0.8"/><path d="M7 2.5 L12 2.5 A3.2 3.2 0 0 1 12 8.8"/><path d="M6.5 7.2 L8 8.6 L10.5 6"/><path d="M4.5 5.5 A3.2 3.2 0 0 0 4.5 11.8 L9.5 11.8"/><path d="M11.5 12.6 L13 14 L15.5 11.5"/></g></svg>
<div class="t" style="left:150.78px;top:1028.43px;font-size:21.7px;line-height:21.7px;font-weight:bold;color:#10587c;transform:scaleX(0.944);transform-origin:0 0;">Workflow Approvals</div>
<svg style="position:absolute;left:146.7px;top:1079.7px;" width="17.2" height="16.7" viewBox="0 0 16.3 15.2"><g fill="none" stroke="#161513" stroke-width="1.6" stroke-linecap="round" stroke-linejoin="round"><path d="M1 1.8 L2.4 3.2 L4.8 0.8"/><path d="M7 2.5 L12 2.5 A3.2 3.2 0 0 1 12 8.8"/><path d="M6.5 7.2 L8 8.6 L10.5 6"/><path d="M4.5 5.5 A3.2 3.2 0 0 0 4.5 11.8 L9.5 11.8"/><path d="M11.5 12.6 L13 14 L15.5 11.5"/></g></svg>
<div class="t" style="left:170.23px;top:1080.63px;font-size:21.7px;line-height:21.7px;font-weight:bold;color:#10587c;transform:scaleX(0.944);transform-origin:0 0;">My Approvals</div>
<svg style="position:absolute;left:659.0px;top:1082.5px;" width="18.5" height="14.6" viewBox="0 0 18 14.5"><g fill="none" stroke="#161513" stroke-width="1.5" stroke-linejoin="round"><path d="M1 1 L7 1 L12 6.5 L6.5 13 L1 8 Z"/><path d="M9 1.5 L11 1.5 L17 7 L11 13.8 L9.8 12.6"/></g><circle cx="4.8" cy="5" r="0.9" fill="#161513"/></svg>
<svg style="position:absolute;left:146.7px;top:1131.9px;" width="17.2" height="16.7" viewBox="0 0 16.3 15.2"><g fill="none" stroke="#161513" stroke-width="1.6" stroke-linecap="round" stroke-linejoin="round"><path d="M1 1.8 L2.4 3.2 L4.8 0.8"/><path d="M7 2.5 L12 2.5 A3.2 3.2 0 0 1 12 8.8"/><path d="M6.5 7.2 L8 8.6 L10.5 6"/><path d="M4.5 5.5 A3.2 3.2 0 0 0 4.5 11.8 L9.5 11.8"/><path d="M11.5 12.6 L13 14 L15.5 11.5"/></g></svg>
<div class="t" style="left:170.23px;top:1132.83px;font-size:21.7px;line-height:21.7px;font-weight:bold;color:#10587c;transform:scaleX(0.944);transform-origin:0 0;">My Employees Status</div>
<svg style="position:absolute;left:659.0px;top:1134.7px;" width="18.5" height="14.6" viewBox="0 0 18 14.5"><g fill="none" stroke="#161513" stroke-width="1.5" stroke-linejoin="round"><path d="M1 1 L7 1 L12 6.5 L6.5 13 L1 8 Z"/><path d="M9 1.5 L11 1.5 L17 7 L11 13.8 L9.8 12.6"/></g><circle cx="4.8" cy="5" r="0.9" fill="#161513"/></svg>
<svg style="position:absolute;left:146.7px;top:1184.1px;" width="17.2" height="16.7" viewBox="0 0 16.3 15.2"><g fill="none" stroke="#161513" stroke-width="1.6" stroke-linecap="round" stroke-linejoin="round"><path d="M1 1.8 L2.4 3.2 L4.8 0.8"/><path d="M7 2.5 L12 2.5 A3.2 3.2 0 0 1 12 8.8"/><path d="M6.5 7.2 L8 8.6 L10.5 6"/><path d="M4.5 5.5 A3.2 3.2 0 0 0 4.5 11.8 L9.5 11.8"/><path d="M11.5 12.6 L13 14 L15.5 11.5"/></g></svg>
<div class="t" style="left:170.23px;top:1185.03px;font-size:21.7px;line-height:21.7px;font-weight:bold;color:#10587c;transform:scaleX(0.944);transform-origin:0 0;">MyPendingApprovals</div>
<svg style="position:absolute;left:659.0px;top:1186.9px;" width="18.5" height="14.6" viewBox="0 0 18 14.5"><g fill="none" stroke="#161513" stroke-width="1.5" stroke-linejoin="round"><path d="M1 1 L7 1 L12 6.5 L6.5 13 L1 8 Z"/><path d="M9 1.5 L11 1.5 L17 7 L11 13.8 L9.8 12.6"/></g><circle cx="4.8" cy="5" r="0.9" fill="#161513"/></svg>
<svg style="position:absolute;left:146.7px;top:1236.3px;" width="17.2" height="16.7" viewBox="0 0 16.3 15.2"><g fill="none" stroke="#161513" stroke-width="1.6" stroke-linecap="round" stroke-linejoin="round"><path d="M1 1.8 L2.4 3.2 L4.8 0.8"/><path d="M7 2.5 L12 2.5 A3.2 3.2 0 0 1 12 8.8"/><path d="M6.5 7.2 L8 8.6 L10.5 6"/><path d="M4.5 5.5 A3.2 3.2 0 0 0 4.5 11.8 L9.5 11.8"/><path d="M11.5 12.6 L13 14 L15.5 11.5"/></g></svg>
<div class="t" style="left:171.58px;top:1237.23px;font-size:21.7px;line-height:21.7px;font-weight:bold;color:#10587c;transform:scaleX(0.944);transform-origin:0 0;">Waiting for Review</div>
<svg style="position:absolute;left:659.0px;top:1239.1px;" width="18.5" height="14.6" viewBox="0 0 18 14.5"><g fill="none" stroke="#161513" stroke-width="1.5" stroke-linejoin="round"><path d="M1 1 L7 1 L12 6.5 L6.5 13 L1 8 Z"/><path d="M9 1.5 L11 1.5 L17 7 L11 13.8 L9.8 12.6"/></g><circle cx="4.8" cy="5" r="0.9" fill="#161513"/></svg>
<svg style="position:absolute;left:101.0px;top:1298.9px;" width="14.2" height="7.5" viewBox="0 0 14 7.5"><path d="M0 0 L14 0 L7 7.5 Z" fill="#1f1d1c"/></svg>
<svg style="position:absolute;left:125.7px;top:1289.9px;" width="17.0" height="17.0" viewBox="0 0 17 17"><g fill="none" stroke="#161513" stroke-width="1.7" stroke-linecap="round"><path d="M2.6 5.5 A7 7 0 1 1 1.5 9"/><path d="M1.3 2.5 L2.6 5.7 L5.8 4.6"/><path d="M8.5 5 L8.5 9 L11 10.5"/></g></svg>
<div class="t" style="left:150.78px;top:1289.43px;font-size:21.7px;line-height:21.7px;font-weight:bold;color:#10587c;transform:scaleX(0.944);transform-origin:0 0;">Workflow History</div>
<svg style="position:absolute;left:146.7px;top:1342.1px;" width="17.0" height="17.0" viewBox="0 0 17 17"><g fill="none" stroke="#161513" stroke-width="1.7" stroke-linecap="round"><path d="M2.6 5.5 A7 7 0 1 1 1.5 9"/><path d="M1.3 2.5 L2.6 5.7 L5.8 4.6"/><path d="M8.5 5 L8.5 9 L11 10.5"/></g></svg>
<div class="t" style="left:170.23px;top:1341.63px;font-size:21.7px;line-height:21.7px;font-weight:bold;color:#10587c;transform:scaleX(0.944);transform-origin:0 0;">History Affected Items Search</div>
<svg style="position:absolute;left:659.0px;top:1343.5px;" width="18.5" height="14.6" viewBox="0 0 18 14.5"><g fill="none" stroke="#161513" stroke-width="1.5" stroke-linejoin="round"><path d="M1 1 L7 1 L12 6.5 L6.5 13 L1 8 Z"/><path d="M9 1.5 L11 1.5 L17 7 L11 13.8 L9.8 12.6"/></g><circle cx="4.8" cy="5" r="0.9" fill="#161513"/></svg>
<div class="t" style="left:762.11px;top:105.40px;font-size:40.4px;line-height:40.4px;font-weight:bold;color:#161513;transform:scaleX(0.923);transform-origin:0 0;">Product Management</div>
<div style="position:absolute;left:763.0px;top:170.0px;width:256.0px;height:3.0px;background:#161513;"></div>
<div style="position:absolute;left:1019.0px;top:191.0px;width:1.0px;height:73.0px;background:#dcd9d6;"></div>
<div class="t" style="left:793.99px;top:192.05px;font-size:19.2px;line-height:19.2px;font-weight:normal;color:#161513;transform:scaleX(0.958);transform-origin:0 0;">Pinned Items</div>
<div class="t" style="left:794.28px;top:224.66px;font-size:21.66px;line-height:21.66px;font-weight:bold;color:#161513;transform:scaleX(1.04);transform-origin:0 0;">12</div>
<div class="t" style="left:1050.10px;top:192.05px;font-size:19.2px;line-height:19.2px;font-weight:normal;color:#161513;transform:scaleX(0.922);transform-origin:0 0;">Change Order KPI</div>
<div style="position:absolute;left:1216.4px;top:188.5px;width:67.0px;height:26.5px;background:#d3e8bd;border-radius:13px;"></div>
<div class="t" style="left:1226.56px;top:194.48px;font-size:14.2px;line-height:14.2px;font-weight:normal;color:#1f2a17;transform:scaleX(0.95);transform-origin:0 0;">Optimal</div>
<div class="t" style="left:1050.48px;top:224.66px;font-size:21.66px;line-height:21.66px;font-weight:bold;color:#161513;transform:scaleX(1.039);transform-origin:0 0;">39.4965517241379</div>
<div style="position:absolute;left:2253.6px;top:101.6px;width:182.7px;height:46.4px;border:1.5px solid #b9b6b2;border-radius:7px;box-sizing:border-box;"></div>
<div class="t" style="left:2275.75px;top:116.61px;font-size:18.3px;line-height:18.3px;font-weight:bold;color:#161513;transform:scaleX(0.938);transform-origin:0 0;">Edit Page Layout</div>
<div style="position:absolute;left:774.0px;top:264.6px;width:718.6px;height:47.0px;border:1.5px solid #96928e;border-radius:7px;box-sizing:border-box;"></div>
<svg style="position:absolute;left:797.0px;top:276.0px;" width="23.5" height="23.5" viewBox="0 0 22 22"><g fill="none" stroke="#161513" stroke-width="2.2"><circle cx="9" cy="9" r="7.3"/><path d="M14.3 14.3 L21 21" stroke-linecap="square"/></g></svg>
<div class="t" style="left:842.27px;top:276.21px;font-size:22.2px;line-height:22.2px;font-weight:normal;color:#6f6c69;transform:scaleX(0.92);transform-origin:0 0;">Search</div>
<svg style="position:absolute;left:786.0px;top:338.0px;" width="9.0" height="14.0" viewBox="0 0 9 14"><path d="M7.5 1 L1.5 7 L7.5 13" fill="none" stroke="#161513" stroke-width="2.2"/></svg>
<div style="position:absolute;left:810.5px;top:325.0px;width:184.2px;height:41.0px;border:1px solid #e0ddd9;border-radius:9px;box-sizing:border-box;"></div>
<div class="t" style="left:820.58px;top:336.84px;font-size:18.5px;line-height:18.5px;font-weight:normal;color:#161513;">Match Item Number</div>
<div style="position:absolute;left:1008.3px;top:325.0px;width:104.6px;height:41.0px;border:1px solid #e0ddd9;border-radius:9px;box-sizing:border-box;"></div>
<div class="t" style="left:1018.19px;top:336.84px;font-size:18.5px;line-height:18.5px;font-weight:normal;color:#161513;">Item Class</div>
<div style="position:absolute;left:1127.4px;top:325.0px;width:126.0px;height:41.0px;border:1px solid #e0ddd9;border-radius:9px;box-sizing:border-box;"></div>
<div class="t" style="left:1138.12px;top:336.84px;font-size:18.5px;line-height:18.5px;font-weight:normal;color:#161513;">Organization</div>
<div style="position:absolute;left:1267.0px;top:325.0px;width:196.0px;height:41.0px;border:1px solid #e0ddd9;border-radius:9px;box-sizing:border-box;"></div>
<div class="t" style="left:1277.08px;top:336.84px;font-size:18.5px;line-height:18.5px;font-weight:normal;color:#161513;">Has pending changes</div>
<div style="position:absolute;left:1477.6px;top:325.0px;width:166.9px;height:41.0px;border:1px solid #e0ddd9;border-radius:9px;box-sizing:border-box;"></div>
<div class="t" style="left:1487.68px;top:336.84px;font-size:18.5px;line-height:18.5px;font-weight:normal;color:#161513;">Has quality issues</div>
<div style="position:absolute;left:1658px;top:325px;width:28px;height:41px;overflow:hidden;"><div style="position:absolute;left:0;top:0;width:60px;height:41px;border:1px solid #e0ddd9;border-radius:9px;box-sizing:border-box;"></div><div class="t" style="left:11.5px;top:11.84px;font-size:18.5px;line-height:18.5px;color:#161513">H</div></div>
<svg style="position:absolute;left:1699.0px;top:338.0px;" width="9.0" height="14.0" viewBox="0 0 9 14"><path d="M1.5 1 L7.5 7 L1.5 13" fill="none" stroke="#161513" stroke-width="2.2"/></svg>
<div style="position:absolute;left:1721.0px;top:325.0px;width:70.4px;height:41.0px;border:1px solid #e0ddd9;border-radius:9px;box-sizing:border-box;"></div>
<div class="t" style="left:1731.08px;top:336.84px;font-size:18.5px;line-height:18.5px;font-weight:normal;color:#161513;">Filters</div>
<svg style="position:absolute;left:1817.8px;top:333.0px;" width="21.2" height="25.0" viewBox="0 0 21 25"><path d="M1.5 1.5 L19.5 1.5 L19.5 23.5 L10.5 15.5 L1.5 23.5 Z" fill="none" stroke="#161513" stroke-width="2.6" stroke-linejoin="miter"/></svg>
<div style="position:absolute;left:777.3px;top:403.5px;width:20.0px;height:20.0px;border:2px solid #2b2926;border-radius:2px;box-sizing:border-box;"></div>
<div class="t" style="left:810.27px;top:403.01px;font-size:22.2px;line-height:22.2px;font-weight:bold;color:#161513;transform:scaleX(0.948);transform-origin:0 0;">12 items</div>
<div style="position:absolute;left:925.5px;top:389.6px;width:232.9px;height:46.8px;border:1.5px solid #9d9995;border-radius:7px;box-sizing:border-box;"></div>
<svg style="position:absolute;left:939.6px;top:405.2px;" width="20.5" height="16.5" viewBox="0 0 20.5 16.5"><g fill="none" stroke="#161513" stroke-width="2.2"><path d="M1.3 8.25 C4 3.3 7 1.3 10.25 1.3 C13.5 1.3 16.5 3.3 19.2 8.25 C16.5 13.2 13.5 15.2 10.25 15.2 C7 15.2 4 13.2 1.3 8.25 Z"/><circle cx="10.25" cy="8.25" r="3.2"/></g></svg>
<div class="t" style="left:972.53px;top:403.89px;font-size:19.5px;line-height:19.5px;font-weight:bold;color:#161513;transform:scaleX(0.9);transform-origin:0 0;">Landing Page Items</div>
<div style="position:absolute;left:1795.0px;top:389.6px;width:46.4px;height:46.8px;border:1.5px solid #e2dfdb;border-radius:7px;box-sizing:border-box;"></div>
<svg style="position:absolute;left:1807.0px;top:401.0px;" width="22.0" height="22.0" viewBox="0 0 22 22"><g fill="none" stroke="#aeaaa6" stroke-width="2"><path d="M1.5 13 L1.5 20.5 L20.5 20.5 L20.5 13"/><path d="M11 1.5 L11 15 M6 10 L11 15 L16 10"/></g></svg>
<div class="t" style="left:831.41px;top:462.63px;font-size:21.7px;line-height:21.7px;font-weight:bold;color:#161513;transform:scaleX(0.955);transform-origin:0 0;">Item</div>
<div class="t" style="left:831.41px;top:488.63px;font-size:21.7px;line-height:21.7px;font-weight:bold;color:#161513;transform:scaleX(0.955);transform-origin:0 0;">Number</div>
<svg style="position:absolute;left:964.6px;top:477.0px;" width="14.0" height="19.0" viewBox="0 0 14 19"><g fill="none" stroke="#161513" stroke-width="1.8" stroke-linejoin="miter"><path d="M1.5 6.5 L7 1.5 L12.5 6.5"/><path d="M1.5 12.5 L7 17.5 L12.5 12.5"/></g></svg>
<div class="t" style="left:1019.21px;top:462.63px;font-size:21.7px;line-height:21.7px;font-weight:bold;color:#161513;transform:scaleX(0.955);transform-origin:0 0;">Item</div>
<div class="t" style="left:1019.21px;top:488.63px;font-size:21.7px;line-height:21.7px;font-weight:bold;color:#161513;transform:scaleX(0.955);transform-origin:0 0;">Description</div>
<svg style="position:absolute;left:1184.0px;top:477.0px;" width="14.0" height="19.0" viewBox="0 0 14 19"><g fill="none" stroke="#161513" stroke-width="1.8" stroke-linejoin="miter"><path d="M1.5 6.5 L7 1.5 L12.5 6.5"/><path d="M1.5 12.5 L7 17.5 L12.5 12.5"/></g></svg>
<div class="t" style="left:1237.41px;top:462.63px;font-size:21.7px;line-height:21.7px;font-weight:bold;color:#161513;transform:scaleX(0.955);transform-origin:0 0;">Item</div>
<div class="t" style="left:1237.95px;top:488.63px;font-size:21.7px;line-height:21.7px;font-weight:bold;color:#161513;transform:scaleX(0.955);transform-origin:0 0;">Class</div>
<svg style="position:absolute;left:1345.7px;top:477.0px;" width="14.0" height="19.0" viewBox="0 0 14 19"><g fill="none" stroke="#161513" stroke-width="1.8" stroke-linejoin="miter"><path d="M1.5 6.5 L7 1.5 L12.5 6.5"/><path d="M1.5 12.5 L7 17.5 L12.5 12.5"/></g></svg>
<div class="t" style="left:1401.46px;top:475.56px;font-size:21.9px;line-height:21.9px;font-weight:bold;color:#161513;transform:scaleX(0.94);transform-origin:0 0;">Organization</div>
<svg style="position:absolute;left:1535.0px;top:477.0px;" width="14.0" height="19.0" viewBox="0 0 14 19"><g fill="none" stroke="#161513" stroke-width="1.8" stroke-linejoin="miter"><path d="M1.5 6.5 L7 1.5 L12.5 6.5"/><path d="M1.5 12.5 L7 17.5 L12.5 12.5"/></g></svg>
<svg style="position:absolute;left:1592.3px;top:474.5px;" width="18.0" height="18.0" viewBox="0 0 18 18"><g fill="none" stroke="#161513" stroke-width="1.8"><path d="M10 17 L1 17 L1 1 L10 1 L15 6 L15 10"/><path d="M10 1 L10 6 L15 6"/></g><circle cx="14" cy="14" r="3.6" fill="#161513"/><path d="M14 12 L14 14.3" stroke="#fff" stroke-width="1.3"/></svg>
<svg style="position:absolute;left:1649.8px;top:475.6px;" width="10.6" height="17.0" viewBox="0 0 10.6 17"><g fill="none" stroke="#161513" stroke-width="1.8"><circle cx="5.3" cy="5.3" r="4.2"/><path d="M2.5 9 L2.5 16 L5.3 13.5 L8.1 16 L8.1 9"/></g></svg>
<svg style="position:absolute;left:1702.0px;top:475.6px;" width="12.6" height="17.0" viewBox="0 0 12.6 17"><path d="M4.5 4.5 L4.5 11.5 C4.5 13 5.3 13.7 6.3 13.7 C7.3 13.7 8.1 13 8.1 11.5 L8.1 4 C8.1 2 7.2 1 6.3 1 C3 1 1.2 3 1.2 6 L1.2 11.5 C1.2 14.5 3.5 16 6.3 16 C9.1 16 11.4 14.5 11.4 11.5 L11.4 3.5" fill="none" stroke="#161513" stroke-width="1.8"/></svg>
<svg style="position:absolute;left:1753.4px;top:475.0px;" width="17.5" height="18.0" viewBox="0 0 17.5 18"><g fill="none" stroke="#161513" stroke-width="1.8"><rect x="1" y="1" width="3.6" height="3.6"/><rect x="7.5" y="7.3" width="3.6" height="3.6"/><rect x="13" y="13.3" width="3.6" height="3.6"/><path d="M2.8 4.6 L2.8 15.1 L13 15.1 M2.8 9.1 L7.5 9.1"/></g></svg>
<svg style="position:absolute;left:1806.6px;top:475.6px;" width="18.0" height="17.5" viewBox="0 0 18 17.5"><g fill="none" stroke="#161513" stroke-width="1.8"><path d="M1 16.5 L1 1 L3.5 1 L3.5 8 L8.5 4.5 L8.5 8 L17 3.5 L17 16.5 Z"/><rect x="4" y="10.5" width="2.8" height="2.8"/><rect x="10" y="10.5" width="2.8" height="2.8"/></g><rect x="1" y="14.8" width="16" height="1.8" fill="#888"/></svg>
<div style="position:absolute;left:762.7px;top:515.5px;width:1073.3px;height:1.2px;background:#dedbd7;"></div>
<div style="position:absolute;left:776.6px;top:532.2px;width:20.0px;height:20.0px;border:2px solid #2b2926;border-radius:2px;box-sizing:border-box;"></div>
<div class="t" style="left:832.66px;top:530.31px;font-size:22.2px;line-height:22.2px;font-weight:normal;color:#10587c;transform:scaleX(0.945);transform-origin:0 0;">AS25155</div>
<div class="t" style="left:1019.62px;top:530.31px;font-size:22.2px;line-height:22.2px;font-weight:normal;color:#161513;transform:scaleX(0.935);transform-origin:0 0;">1TB HDD7200</div>
<div class="t" style="left:1238.66px;top:530.31px;font-size:22.2px;line-height:22.2px;font-weight:normal;color:#161513;transform:scaleX(0.935);transform-origin:0 0;">Storage</div>
<div class="t" style="left:1401.49px;top:530.31px;font-size:22.2px;line-height:22.2px;font-weight:normal;color:#161513;transform:scaleX(0.935);transform-origin:0 0;">000</div>
<svg style="position:absolute;left:1699.8px;top:534.8px;" width="17.4" height="14.0" viewBox="0 0 17.4 14"><g fill="none" stroke="#1b5f82" stroke-width="1.9"><path d="M1.2 7 C3.5 2.8 6 1.2 8.7 1.2 C11.4 1.2 13.9 2.8 16.2 7 C13.9 11.2 11.4 12.8 8.7 12.8 C6 12.8 3.5 11.2 1.2 7 Z"/><circle cx="8.7" cy="7" r="2.7"/></g></svg>
<div style="position:absolute;left:762.7px;top:566.7px;width:1073.3px;height:1.2px;background:#e4e1de;"></div>
<div style="position:absolute;left:776.6px;top:584.4px;width:20.0px;height:20.0px;border:2px solid #2b2926;border-radius:2px;box-sizing:border-box;"></div>
<div class="t" style="left:832.66px;top:582.51px;font-size:22.2px;line-height:22.2px;font-weight:normal;color:#10587c;transform:scaleX(0.945);transform-origin:0 0;">AS47010</div>
<div class="t" style="left:1021.11px;top:582.51px;font-size:22.2px;line-height:22.2px;font-weight:normal;color:#161513;transform:scaleX(0.935);transform-origin:0 0;">Vario 8500 PD …</div>
<div class="t" style="left:1239.51px;top:582.51px;font-size:22.2px;line-height:22.2px;font-weight:normal;color:#161513;transform:scaleX(0.935);transform-origin:0 0;">VarioH</div>
<div class="t" style="left:1401.49px;top:582.51px;font-size:22.2px;line-height:22.2px;font-weight:normal;color:#161513;transform:scaleX(0.935);transform-origin:0 0;">000</div>
<svg style="position:absolute;left:1699.8px;top:587.0px;" width="17.4" height="14.0" viewBox="0 0 17.4 14"><g fill="none" stroke="#1b5f82" stroke-width="1.9"><path d="M1.2 7 C3.5 2.8 6 1.2 8.7 1.2 C11.4 1.2 13.9 2.8 16.2 7 C13.9 11.2 11.4 12.8 8.7 12.8 C6 12.8 3.5 11.2 1.2 7 Z"/><circle cx="8.7" cy="7" r="2.7"/></g></svg>
<svg style="position:absolute;left:1753.0px;top:585.7px;" width="18.0" height="18.0" viewBox="0 0 18 18"><g fill="none" stroke="#1b5f82" stroke-width="1.9"><path d="M7.5 1 L1 1 L1 17 L17 17 L17 10.5"/><path d="M11 1 L17 1 L17 7 M17 1 L8.5 9.5"/></g></svg>
<div style="position:absolute;left:762.7px;top:618.9px;width:1073.3px;height:1.2px;background:#e4e1de;"></div>
<div style="position:absolute;left:776.6px;top:636.6px;width:20.0px;height:20.0px;border:2px solid #2b2926;border-radius:2px;box-sizing:border-box;"></div>
<div class="t" style="left:832.66px;top:634.71px;font-size:22.2px;line-height:22.2px;font-weight:normal;color:#10587c;transform:scaleX(0.945);transform-origin:0 0;">AS85001</div>
<div class="t" style="left:1020.16px;top:634.71px;font-size:22.2px;line-height:22.2px;font-weight:normal;color:#161513;transform:scaleX(0.935);transform-origin:0 0;">Green Server 15…</div>
<div class="t" style="left:1238.56px;top:634.71px;font-size:22.2px;line-height:22.2px;font-weight:normal;color:#161513;transform:scaleX(0.935);transform-origin:0 0;">Green Ser…</div>
<div class="t" style="left:1401.49px;top:634.71px;font-size:22.2px;line-height:22.2px;font-weight:normal;color:#161513;transform:scaleX(0.935);transform-origin:0 0;">000</div>
<svg style="position:absolute;left:1592.6px;top:639.2px;" width="17.4" height="14.0" viewBox="0 0 17.4 14"><g fill="none" stroke="#1b5f82" stroke-width="1.9"><path d="M1.2 7 C3.5 2.8 6 1.2 8.7 1.2 C11.4 1.2 13.9 2.8 16.2 7 C13.9 11.2 11.4 12.8 8.7 12.8 C6 12.8 3.5 11.2 1.2 7 Z"/><circle cx="8.7" cy="7" r="2.7"/></g></svg>
<svg style="position:absolute;left:1699.8px;top:639.2px;" width="17.4" height="14.0" viewBox="0 0 17.4 14"><g fill="none" stroke="#1b5f82" stroke-width="1.9"><path d="M1.2 7 C3.5 2.8 6 1.2 8.7 1.2 C11.4 1.2 13.9 2.8 16.2 7 C13.9 11.2 11.4 12.8 8.7 12.8 C6 12.8 3.5 11.2 1.2 7 Z"/><circle cx="8.7" cy="7" r="2.7"/></g></svg>
<svg style="position:absolute;left:1753.0px;top:637.9px;" width="18.0" height="18.0" viewBox="0 0 18 18"><g fill="none" stroke="#1b5f82" stroke-width="1.9"><path d="M7.5 1 L1 1 L1 17 L17 17 L17 10.5"/><path d="M11 1 L17 1 L17 7 M17 1 L8.5 9.5"/></g></svg>
<svg style="position:absolute;left:1806.8px;top:639.2px;" width="17.4" height="14.0" viewBox="0 0 17.4 14"><g fill="none" stroke="#1b5f82" stroke-width="1.9"><path d="M1.2 7 C3.5 2.8 6 1.2 8.7 1.2 C11.4 1.2 13.9 2.8 16.2 7 C13.9 11.2 11.4 12.8 8.7 12.8 C6 12.8 3.5 11.2 1.2 7 Z"/><circle cx="8.7" cy="7" r="2.7"/></g></svg>
<div style="position:absolute;left:762.7px;top:671.1px;width:1073.3px;height:1.2px;background:#e4e1de;"></div>
<div style="position:absolute;left:776.6px;top:688.8px;width:20.0px;height:20.0px;border:2px solid #2b2926;border-radius:2px;box-sizing:border-box;"></div>
<div class="t" style="left:831.63px;top:686.91px;font-size:22.2px;line-height:22.2px;font-weight:normal;color:#10587c;transform:scaleX(0.945);transform-origin:0 0;">CAP10048</div>
<div class="t" style="left:1020.15px;top:686.91px;font-size:22.2px;line-height:22.2px;font-weight:normal;color:#161513;transform:scaleX(0.935);transform-origin:0 0;">CAP,TA,E,20%,2…</div>
<div class="t" style="left:1237.90px;top:686.91px;font-size:22.2px;line-height:22.2px;font-weight:normal;color:#161513;transform:scaleX(0.935);transform-origin:0 0;">HT Capaci…</div>
<div class="t" style="left:1401.49px;top:686.91px;font-size:22.2px;line-height:22.2px;font-weight:normal;color:#161513;transform:scaleX(0.935);transform-origin:0 0;">000</div>
<svg style="position:absolute;left:1806.8px;top:691.4px;" width="17.4" height="14.0" viewBox="0 0 17.4 14"><g fill="none" stroke="#1b5f82" stroke-width="1.9"><path d="M1.2 7 C3.5 2.8 6 1.2 8.7 1.2 C11.4 1.2 13.9 2.8 16.2 7 C13.9 11.2 11.4 12.8 8.7 12.8 C6 12.8 3.5 11.2 1.2 7 Z"/><circle cx="8.7" cy="7" r="2.7"/></g></svg>
<div style="position:absolute;left:762.7px;top:723.3px;width:1073.3px;height:1.2px;background:#e4e1de;"></div>
<div style="position:absolute;left:776.6px;top:741.0px;width:20.0px;height:20.0px;border:2px solid #2b2926;border-radius:2px;box-sizing:border-box;"></div>
<div class="t" style="left:831.63px;top:739.11px;font-size:22.2px;line-height:22.2px;font-weight:normal;color:#10587c;transform:scaleX(0.945);transform-origin:0 0;">CM50003</div>
<div class="t" style="left:1019.50px;top:739.11px;font-size:22.2px;line-height:22.2px;font-weight:normal;color:#161513;transform:scaleX(0.935);transform-origin:0 0;">Dual Core 3.8GHz</div>
<div class="t" style="left:1237.90px;top:739.11px;font-size:22.2px;line-height:22.2px;font-weight:normal;color:#161513;transform:scaleX(0.935);transform-origin:0 0;">Processors</div>
<div class="t" style="left:1401.49px;top:739.11px;font-size:22.2px;line-height:22.2px;font-weight:normal;color:#161513;transform:scaleX(0.935);transform-origin:0 0;">000</div>
<svg style="position:absolute;left:1699.8px;top:743.6px;" width="17.4" height="14.0" viewBox="0 0 17.4 14"><g fill="none" stroke="#1b5f82" stroke-width="1.9"><path d="M1.2 7 C3.5 2.8 6 1.2 8.7 1.2 C11.4 1.2 13.9 2.8 16.2 7 C13.9 11.2 11.4 12.8 8.7 12.8 C6 12.8 3.5 11.2 1.2 7 Z"/><circle cx="8.7" cy="7" r="2.7"/></g></svg>
<div style="position:absolute;left:762.7px;top:775.5px;width:1073.3px;height:1.2px;background:#e4e1de;"></div>
<div style="position:absolute;left:776.6px;top:793.2px;width:20.0px;height:20.0px;border:2px solid #2b2926;border-radius:2px;box-sizing:border-box;"></div>
<div class="t" style="left:831.63px;top:791.31px;font-size:22.2px;line-height:22.2px;font-weight:normal;color:#10587c;transform:scaleX(0.945);transform-origin:0 0;">CM50004</div>
<div class="t" style="left:1020.22px;top:791.31px;font-size:22.2px;line-height:22.2px;font-weight:normal;color:#161513;transform:scaleX(0.935);transform-origin:0 0;">Quad Core 2.8GHz</div>
<div class="t" style="left:1237.90px;top:791.31px;font-size:22.2px;line-height:22.2px;font-weight:normal;color:#161513;transform:scaleX(0.935);transform-origin:0 0;">Processors</div>
<div class="t" style="left:1401.49px;top:791.31px;font-size:22.2px;line-height:22.2px;font-weight:normal;color:#161513;transform:scaleX(0.935);transform-origin:0 0;">000</div>
<svg style="position:absolute;left:1699.8px;top:795.8px;" width="17.4" height="14.0" viewBox="0 0 17.4 14"><g fill="none" stroke="#1b5f82" stroke-width="1.9"><path d="M1.2 7 C3.5 2.8 6 1.2 8.7 1.2 C11.4 1.2 13.9 2.8 16.2 7 C13.9 11.2 11.4 12.8 8.7 12.8 C6 12.8 3.5 11.2 1.2 7 Z"/><circle cx="8.7" cy="7" r="2.7"/></g></svg>
<svg style="position:absolute;left:1753.0px;top:794.5px;" width="18.0" height="18.0" viewBox="0 0 18 18"><g fill="none" stroke="#1b5f82" stroke-width="1.9"><path d="M7.5 1 L1 1 L1 17 L17 17 L17 10.5"/><path d="M11 1 L17 1 L17 7 M17 1 L8.5 9.5"/></g></svg>
<div style="position:absolute;left:762.7px;top:827.7px;width:1073.3px;height:1.2px;background:#e4e1de;"></div>
<div style="position:absolute;left:776.6px;top:845.4px;width:20.0px;height:20.0px;border:2px solid #2b2926;border-radius:2px;box-sizing:border-box;"></div>
<div class="t" style="left:831.63px;top:843.51px;font-size:22.2px;line-height:22.2px;font-weight:normal;color:#10587c;transform:scaleX(0.945);transform-origin:0 0;">CM65063</div>
<div class="t" style="left:1020.16px;top:843.51px;font-size:22.2px;line-height:22.2px;font-weight:normal;color:#161513;transform:scaleX(0.935);transform-origin:0 0;">Gyroscope</div>
<div class="t" style="left:1239.13px;top:843.51px;font-size:22.2px;line-height:22.2px;font-weight:normal;color:#161513;transform:scaleX(0.935);transform-origin:0 0;">Tablet Co…</div>
<div class="t" style="left:1401.49px;top:843.51px;font-size:22.2px;line-height:22.2px;font-weight:normal;color:#161513;transform:scaleX(0.935);transform-origin:0 0;">000</div>
<svg style="position:absolute;left:1699.8px;top:848.0px;" width="17.4" height="14.0" viewBox="0 0 17.4 14"><g fill="none" stroke="#1b5f82" stroke-width="1.9"><path d="M1.2 7 C3.5 2.8 6 1.2 8.7 1.2 C11.4 1.2 13.9 2.8 16.2 7 C13.9 11.2 11.4 12.8 8.7 12.8 C6 12.8 3.5 11.2 1.2 7 Z"/><circle cx="8.7" cy="7" r="2.7"/></g></svg>
<svg style="position:absolute;left:1806.8px;top:848.0px;" width="17.4" height="14.0" viewBox="0 0 17.4 14"><g fill="none" stroke="#1b5f82" stroke-width="1.9"><path d="M1.2 7 C3.5 2.8 6 1.2 8.7 1.2 C11.4 1.2 13.9 2.8 16.2 7 C13.9 11.2 11.4 12.8 8.7 12.8 C6 12.8 3.5 11.2 1.2 7 Z"/><circle cx="8.7" cy="7" r="2.7"/></g></svg>
<div style="position:absolute;left:762.7px;top:879.9px;width:1073.3px;height:1.2px;background:#e4e1de;"></div>
<div style="position:absolute;left:776.6px;top:897.6px;width:20.0px;height:20.0px;border:2px solid #2b2926;border-radius:2px;box-sizing:border-box;"></div>
<div class="t" style="left:830.98px;top:895.71px;font-size:22.2px;line-height:22.2px;font-weight:normal;color:#10587c;transform:scaleX(0.945);transform-origin:0 0;">ECM500016</div>
<div class="t" style="left:1021.16px;top:895.71px;font-size:22.2px;line-height:22.2px;font-weight:normal;color:#161513;transform:scaleX(0.935);transform-origin:0 0;">Ambient Light S…</div>
<div class="t" style="left:1237.90px;top:895.71px;font-size:22.2px;line-height:22.2px;font-weight:normal;color:#161513;transform:scaleX(0.935);transform-origin:0 0;">Fitness Co…</div>
<div class="t" style="left:1401.49px;top:895.71px;font-size:22.2px;line-height:22.2px;font-weight:normal;color:#161513;transform:scaleX(0.935);transform-origin:0 0;">000</div>
<svg style="position:absolute;left:1592.6px;top:900.2px;" width="17.4" height="14.0" viewBox="0 0 17.4 14"><g fill="none" stroke="#1b5f82" stroke-width="1.9"><path d="M1.2 7 C3.5 2.8 6 1.2 8.7 1.2 C11.4 1.2 13.9 2.8 16.2 7 C13.9 11.2 11.4 12.8 8.7 12.8 C6 12.8 3.5 11.2 1.2 7 Z"/><circle cx="8.7" cy="7" r="2.7"/></g></svg>
<svg style="position:absolute;left:1646.3px;top:900.2px;" width="17.4" height="14.0" viewBox="0 0 17.4 14"><g fill="none" stroke="#1b5f82" stroke-width="1.9"><path d="M1.2 7 C3.5 2.8 6 1.2 8.7 1.2 C11.4 1.2 13.9 2.8 16.2 7 C13.9 11.2 11.4 12.8 8.7 12.8 C6 12.8 3.5 11.2 1.2 7 Z"/><circle cx="8.7" cy="7" r="2.7"/></g></svg>
<svg style="position:absolute;left:1699.8px;top:900.2px;" width="17.4" height="14.0" viewBox="0 0 17.4 14"><g fill="none" stroke="#1b5f82" stroke-width="1.9"><path d="M1.2 7 C3.5 2.8 6 1.2 8.7 1.2 C11.4 1.2 13.9 2.8 16.2 7 C13.9 11.2 11.4 12.8 8.7 12.8 C6 12.8 3.5 11.2 1.2 7 Z"/><circle cx="8.7" cy="7" r="2.7"/></g></svg>
<svg style="position:absolute;left:1806.8px;top:900.2px;" width="17.4" height="14.0" viewBox="0 0 17.4 14"><g fill="none" stroke="#1b5f82" stroke-width="1.9"><path d="M1.2 7 C3.5 2.8 6 1.2 8.7 1.2 C11.4 1.2 13.9 2.8 16.2 7 C13.9 11.2 11.4 12.8 8.7 12.8 C6 12.8 3.5 11.2 1.2 7 Z"/><circle cx="8.7" cy="7" r="2.7"/></g></svg>
<div style="position:absolute;left:762.7px;top:932.1px;width:1073.3px;height:1.2px;background:#e4e1de;"></div>
<div style="position:absolute;left:776.6px;top:949.8px;width:20.0px;height:20.0px;border:2px solid #2b2926;border-radius:2px;box-sizing:border-box;"></div>
<div class="t" style="left:830.98px;top:947.91px;font-size:22.2px;line-height:22.2px;font-weight:normal;color:#10587c;transform:scaleX(0.945);transform-origin:0 0;">MDPRT10002</div>
<div class="t" style="left:1021.11px;top:947.91px;font-size:22.2px;line-height:22.2px;font-weight:normal;color:#161513;transform:scaleX(0.935);transform-origin:0 0;">VENTURI TIP, 5…</div>
<div class="t" style="left:1237.90px;top:947.91px;font-size:22.2px;line-height:22.2px;font-weight:normal;color:#161513;transform:scaleX(0.935);transform-origin:0 0;">MD Item</div>
<div class="t" style="left:1401.49px;top:947.91px;font-size:22.2px;line-height:22.2px;font-weight:normal;color:#161513;transform:scaleX(0.935);transform-origin:0 0;">000</div>
<svg style="position:absolute;left:1699.8px;top:952.4px;" width="17.4" height="14.0" viewBox="0 0 17.4 14"><g fill="none" stroke="#1b5f82" stroke-width="1.9"><path d="M1.2 7 C3.5 2.8 6 1.2 8.7 1.2 C11.4 1.2 13.9 2.8 16.2 7 C13.9 11.2 11.4 12.8 8.7 12.8 C6 12.8 3.5 11.2 1.2 7 Z"/><circle cx="8.7" cy="7" r="2.7"/></g></svg>
<svg style="position:absolute;left:1806.8px;top:952.4px;" width="17.4" height="14.0" viewBox="0 0 17.4 14"><g fill="none" stroke="#1b5f82" stroke-width="1.9"><path d="M1.2 7 C3.5 2.8 6 1.2 8.7 1.2 C11.4 1.2 13.9 2.8 16.2 7 C13.9 11.2 11.4 12.8 8.7 12.8 C6 12.8 3.5 11.2 1.2 7 Z"/><circle cx="8.7" cy="7" r="2.7"/></g></svg>
<div style="position:absolute;left:762.7px;top:984.3px;width:1073.3px;height:1.2px;background:#e4e1de;"></div>
<div style="position:absolute;left:776.6px;top:1002.0px;width:20.0px;height:20.0px;border:2px solid #2b2926;border-radius:2px;box-sizing:border-box;"></div>
<div class="t" style="left:830.98px;top:1000.11px;font-size:22.2px;line-height:22.2px;font-weight:normal;color:#10587c;transform:scaleX(0.945);transform-origin:0 0;">RA-0000-1</div>
<div class="t" style="left:1019.50px;top:1000.11px;font-size:22.2px;line-height:22.2px;font-weight:normal;color:#161513;transform:scaleX(0.935);transform-origin:0 0;">RA-000-1 Robo…</div>
<div class="t" style="left:1237.90px;top:1000.11px;font-size:22.2px;line-height:22.2px;font-weight:normal;color:#161513;transform:scaleX(0.935);transform-origin:0 0;">Robotic M…</div>
<div class="t" style="left:1401.49px;top:1000.11px;font-size:22.2px;line-height:22.2px;font-weight:normal;color:#161513;transform:scaleX(0.935);transform-origin:0 0;">000</div>
<svg style="position:absolute;left:1592.6px;top:1004.6px;" width="17.4" height="14.0" viewBox="0 0 17.4 14"><g fill="none" stroke="#1b5f82" stroke-width="1.9"><path d="M1.2 7 C3.5 2.8 6 1.2 8.7 1.2 C11.4 1.2 13.9 2.8 16.2 7 C13.9 11.2 11.4 12.8 8.7 12.8 C6 12.8 3.5 11.2 1.2 7 Z"/><circle cx="8.7" cy="7" r="2.7"/></g></svg>
<svg style="position:absolute;left:1699.8px;top:1004.6px;" width="17.4" height="14.0" viewBox="0 0 17.4 14"><g fill="none" stroke="#1b5f82" stroke-width="1.9"><path d="M1.2 7 C3.5 2.8 6 1.2 8.7 1.2 C11.4 1.2 13.9 2.8 16.2 7 C13.9 11.2 11.4 12.8 8.7 12.8 C6 12.8 3.5 11.2 1.2 7 Z"/><circle cx="8.7" cy="7" r="2.7"/></g></svg>
<svg style="position:absolute;left:1753.0px;top:1003.3px;" width="18.0" height="18.0" viewBox="0 0 18 18"><g fill="none" stroke="#1b5f82" stroke-width="1.9"><path d="M7.5 1 L1 1 L1 17 L17 17 L17 10.5"/><path d="M11 1 L17 1 L17 7 M17 1 L8.5 9.5"/></g></svg>
<svg style="position:absolute;left:1806.8px;top:1004.6px;" width="17.4" height="14.0" viewBox="0 0 17.4 14"><g fill="none" stroke="#1b5f82" stroke-width="1.9"><path d="M1.2 7 C3.5 2.8 6 1.2 8.7 1.2 C11.4 1.2 13.9 2.8 16.2 7 C13.9 11.2 11.4 12.8 8.7 12.8 C6 12.8 3.5 11.2 1.2 7 Z"/><circle cx="8.7" cy="7" r="2.7"/></g></svg>
<div style="position:absolute;left:762.7px;top:1036.5px;width:1073.3px;height:1.2px;background:#e4e1de;"></div>
<div style="position:absolute;left:776.6px;top:1054.2px;width:20.0px;height:20.0px;border:2px solid #2b2926;border-radius:2px;box-sizing:border-box;"></div>
<div class="t" style="left:831.75px;top:1052.31px;font-size:22.2px;line-height:22.2px;font-weight:normal;color:#10587c;transform:scaleX(0.945);transform-origin:0 0;">SB4880005</div>
<div class="t" style="left:1019.50px;top:1052.31px;font-size:22.2px;line-height:22.2px;font-weight:normal;color:#161513;transform:scaleX(0.935);transform-origin:0 0;">Display Assembly</div>
<div class="t" style="left:1239.13px;top:1052.31px;font-size:22.2px;line-height:22.2px;font-weight:normal;color:#161513;transform:scaleX(0.935);transform-origin:0 0;">Tablet Ass…</div>
<div class="t" style="left:1401.49px;top:1052.31px;font-size:22.2px;line-height:22.2px;font-weight:normal;color:#161513;transform:scaleX(0.935);transform-origin:0 0;">000</div>
<svg style="position:absolute;left:1646.3px;top:1056.8px;" width="17.4" height="14.0" viewBox="0 0 17.4 14"><g fill="none" stroke="#1b5f82" stroke-width="1.9"><path d="M1.2 7 C3.5 2.8 6 1.2 8.7 1.2 C11.4 1.2 13.9 2.8 16.2 7 C13.9 11.2 11.4 12.8 8.7 12.8 C6 12.8 3.5 11.2 1.2 7 Z"/><circle cx="8.7" cy="7" r="2.7"/></g></svg>
<svg style="position:absolute;left:1699.8px;top:1056.8px;" width="17.4" height="14.0" viewBox="0 0 17.4 14"><g fill="none" stroke="#1b5f82" stroke-width="1.9"><path d="M1.2 7 C3.5 2.8 6 1.2 8.7 1.2 C11.4 1.2 13.9 2.8 16.2 7 C13.9 11.2 11.4 12.8 8.7 12.8 C6 12.8 3.5 11.2 1.2 7 Z"/><circle cx="8.7" cy="7" r="2.7"/></g></svg>
<svg style="position:absolute;left:1753.0px;top:1055.5px;" width="18.0" height="18.0" viewBox="0 0 18 18"><g fill="none" stroke="#1b5f82" stroke-width="1.9"><path d="M7.5 1 L1 1 L1 17 L17 17 L17 10.5"/><path d="M11 1 L17 1 L17 7 M17 1 L8.5 9.5"/></g></svg>
<svg style="position:absolute;left:1806.8px;top:1056.8px;" width="17.4" height="14.0" viewBox="0 0 17.4 14"><g fill="none" stroke="#1b5f82" stroke-width="1.9"><path d="M1.2 7 C3.5 2.8 6 1.2 8.7 1.2 C11.4 1.2 13.9 2.8 16.2 7 C13.9 11.2 11.4 12.8 8.7 12.8 C6 12.8 3.5 11.2 1.2 7 Z"/><circle cx="8.7" cy="7" r="2.7"/></g></svg>
<div style="position:absolute;left:762.7px;top:1088.7px;width:1073.3px;height:1.2px;background:#e4e1de;"></div>
<div style="position:absolute;left:776.6px;top:1106.4px;width:20.0px;height:20.0px;border:2px solid #2b2926;border-radius:2px;box-sizing:border-box;"></div>
<div class="t" style="left:832.23px;top:1104.51px;font-size:22.2px;line-height:22.2px;font-weight:normal;color:#10587c;transform:scaleX(0.945);transform-origin:0 0;">Tofu</div>
<div class="t" style="left:1019.50px;top:1104.51px;font-size:22.2px;line-height:22.2px;font-weight:normal;color:#161513;transform:scaleX(0.935);transform-origin:0 0;">Primary product…</div>
<div class="t" style="left:1237.90px;top:1104.51px;font-size:22.2px;line-height:22.2px;font-weight:normal;color:#161513;transform:scaleX(0.935);transform-origin:0 0;">FB Formula</div>
<div class="t" style="left:1401.49px;top:1104.51px;font-size:22.2px;line-height:22.2px;font-weight:normal;color:#161513;transform:scaleX(0.935);transform-origin:0 0;">000</div>
<svg style="position:absolute;left:1753.0px;top:1107.7px;" width="18.0" height="18.0" viewBox="0 0 18 18"><g fill="none" stroke="#1b5f82" stroke-width="1.9"><path d="M7.5 1 L1 1 L1 17 L17 17 L17 10.5"/><path d="M11 1 L17 1 L17 7 M17 1 L8.5 9.5"/></g></svg>
<div style="position:absolute;left:762.7px;top:1140.9px;width:1073.3px;height:1.2px;background:#e4e1de;"></div>
<div style="position:absolute;left:1873.2px;top:263.0px;width:1.0px;height:1182.0px;background:#e4e2df;"></div>
<div class="t" style="left:1905.18px;top:267.12px;font-size:22.3px;line-height:22.3px;font-weight:bold;color:#161513;transform:scaleX(0.934);transform-origin:0 0;">Actions</div>
<div class="t" style="left:1904.15px;top:328.52px;font-size:21.6px;line-height:21.6px;font-weight:normal;color:#10587c;transform:scaleX(0.985);transform-origin:0 0;">Engineering Items</div>
<div class="t" style="left:1904.15px;top:378.37px;font-size:21.6px;line-height:21.6px;font-weight:normal;color:#10587c;transform:scaleX(0.985);transform-origin:0 0;">Engineering Documents</div>
<div class="t" style="left:1904.15px;top:428.22px;font-size:21.6px;line-height:21.6px;font-weight:normal;color:#10587c;transform:scaleX(0.985);transform-origin:0 0;">Product Ideas</div>
<div class="t" style="left:1905.81px;top:478.07px;font-size:21.6px;line-height:21.6px;font-weight:normal;color:#10587c;transform:scaleX(0.985);transform-origin:0 0;">Views</div>
<div class="t" style="left:1904.15px;top:527.92px;font-size:21.6px;line-height:21.6px;font-weight:normal;color:#10587c;transform:scaleX(0.985);transform-origin:0 0;">New Engineering Item</div>
<div class="t" style="left:1904.15px;top:577.77px;font-size:21.6px;line-height:21.6px;font-weight:normal;color:#10587c;transform:scaleX(0.985);transform-origin:0 0;">New Item</div>
<div class="t" style="left:1903.94px;top:627.62px;font-size:21.6px;line-height:21.6px;font-weight:normal;color:#10587c;transform:scaleX(0.985);transform-origin:0 0;">Item Catalogs</div>
<div class="t" style="left:1904.93px;top:677.47px;font-size:21.6px;line-height:21.6px;font-weight:normal;color:#10587c;transform:scaleX(0.985);transform-origin:0 0;">Spoke Systems</div>
<div class="t" style="left:1904.15px;top:727.32px;font-size:21.6px;line-height:21.6px;font-weight:normal;color:#10587c;transform:scaleX(0.985);transform-origin:0 0;">New Manufacturer</div>
<div class="t" style="left:1904.15px;top:777.17px;font-size:21.6px;line-height:21.6px;font-weight:normal;color:#10587c;transform:scaleX(0.985);transform-origin:0 0;">New Change Request (Classic)</div>
<div class="t" style="left:1904.15px;top:827.02px;font-size:21.6px;line-height:21.6px;font-weight:normal;color:#10587c;transform:scaleX(0.985);transform-origin:0 0;">New Commercial Item</div>
<div class="t" style="left:1904.15px;top:876.87px;font-size:21.6px;line-height:21.6px;font-weight:normal;color:#10587c;transform:scaleX(0.985);transform-origin:0 0;">New Engineering Change Order</div>
<div class="t" style="left:1904.83px;top:926.72px;font-size:21.6px;line-height:21.6px;font-weight:normal;color:#10587c;transform:scaleX(0.985);transform-origin:0 0;">Guided Tasks Configuration</div>
<div class="t" style="left:1904.15px;top:976.57px;font-size:21.6px;line-height:21.6px;font-weight:normal;color:#10587c;transform:scaleX(0.985);transform-origin:0 0;">New Manufacturer Part (Classic)</div>
<div class="t" style="left:1903.94px;top:1026.42px;font-size:21.6px;line-height:21.6px;font-weight:normal;color:#10587c;transform:scaleX(0.985);transform-origin:0 0;">Items</div>
<div class="t" style="left:1904.15px;top:1076.27px;font-size:21.6px;line-height:21.6px;font-weight:normal;color:#10587c;transform:scaleX(0.985);transform-origin:0 0;">New Document</div>
<div class="t" style="left:1904.83px;top:1126.12px;font-size:21.6px;line-height:21.6px;font-weight:normal;color:#10587c;transform:scaleX(0.985);transform-origin:0 0;">Guided Tasks in Progress</div>
<div class="t" style="left:1904.82px;top:1175.97px;font-size:21.6px;line-height:21.6px;font-weight:normal;color:#10587c;transform:scaleX(0.985);transform-origin:0 0;">Compare Items</div>
<div class="t" style="left:1904.83px;top:1225.82px;font-size:21.6px;line-height:21.6px;font-weight:normal;color:#10587c;transform:scaleX(0.985);transform-origin:0 0;">Guided Tasks</div>
<div class="t" style="left:1903.94px;top:1275.67px;font-size:21.6px;line-height:21.6px;font-weight:normal;color:#10587c;transform:scaleX(0.985);transform-origin:0 0;">Indexes</div>
<div class="t" style="left:1905.81px;top:1420.32px;font-size:21.6px;line-height:21.6px;font-weight:normal;color:#10587c;transform:scaleX(0.985);transform-origin:0 0;">View all actions</div>
<div style="position:absolute;left:0.0px;top:1481.0px;width:2500.0px;height:82.0px;background:#243a42;"></div>
<div style="position:absolute;left:0.0px;top:1480.5px;width:2500.0px;height:2.8px;background:#171717;"></div>
<div style="position:absolute;left:63px;top:1479px;width:253px;height:5px;background:#faf9f7;border-radius:0 0 6px 6px;"></div>
<svg style="position:absolute;left:67.6px;top:1511.0px;" width="23.0" height="22.0" viewBox="0 0 23 22"><path d="M1.3 20.8 L1.3 8.5 L11.5 1.5 L21.7 8.5 L21.7 20.8 Z" fill="none" stroke="#fff" stroke-width="2.4"/></svg>
<div class="t" style="left:102.31px;top:1510.40px;font-size:22.8px;line-height:22.8px;font-weight:bold;color:#ffffff;transform:scaleX(0.912);transform-origin:0 0;">Product Management</div>
<svg style="position:absolute;left:363.8px;top:1511.3px;" width="21.5" height="21.5" viewBox="0 0 22 22"><g fill="none" stroke="#c9d0d3" stroke-width="2.2"><circle cx="9" cy="9" r="7.3"/><path d="M14.3 14.3 L21 21" stroke-linecap="square"/></g></svg>
<div class="t" style="left:398.12px;top:1510.40px;font-size:22.8px;line-height:22.8px;font-weight:bold;color:#cdd3d6;transform:scaleX(0.876);transform-origin:0 0;">Search</div>
<div style="position:absolute;left:2442.7px;top:1505.5px;width:57.3px;height:57.5px;background:#c43b26;"></div>
<svg style="position:absolute;left:2455.7px;top:1520.7px;" width="31.6" height="28.5" viewBox="0 0 31.6 28.5"><path d="M4 0.5 L27.6 0.5 C29.8 0.5 31.1 1.8 31.1 4 L31.1 19 C31.1 21.2 29.8 22.5 27.6 22.5 L9.5 22.5 L3.5 28 C2 29 0.5 28.5 0.5 26.5 L0.5 4 C0.5 1.8 1.8 0.5 4 0.5 Z" fill="#fff"/><g fill="#c43b26"><circle cx="6.5" cy="11.1" r="2.6"/><circle cx="15.5" cy="11.1" r="2.6"/><circle cx="24.7" cy="11.1" r="2.6"/></g></svg>
</body></html>
